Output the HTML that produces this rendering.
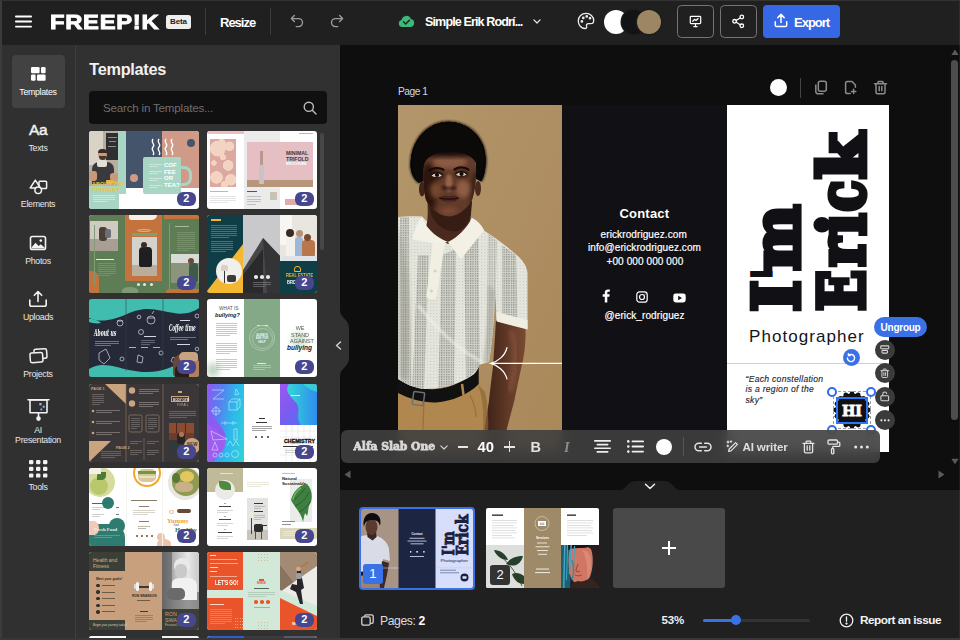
<!DOCTYPE html>
<html lang="en">
<head>
<meta charset="utf-8">
<title>Freepik Designer</title>
<style>
*{box-sizing:border-box;margin:0;padding:0}
html,body{width:960px;height:640px;overflow:hidden;background:#0e0e0e}
body{position:relative;font-family:"Liberation Sans","DejaVu Sans",sans-serif;color:#fff;-webkit-font-smoothing:antialiased}
.abs{position:absolute}
svg{position:absolute;overflow:visible}
.t{position:absolute;white-space:nowrap;line-height:1}
/* ---------- top bar ---------- */
#top{position:absolute;left:0;top:0;width:960px;height:45px;background:#202020;z-index:5}
#top .vd{position:absolute;top:8px;width:1px;height:27px;background:#3c3c3c}
/* ---------- sidebar ---------- */
#side{position:absolute;left:0;top:44px;width:76px;height:596px;background:#303030;border-right:1px solid #3f3f3f}
#side .lab{position:absolute;left:0;width:76px;text-align:center;font-size:8.800px;line-height:11px;color:#e8e8e8;letter-spacing:-.3px}
/* ---------- templates panel ---------- */
#tpl{position:absolute;left:76px;top:44px;width:264px;height:596px;background:#313131;overflow:hidden}
.th{position:absolute;width:110px;height:78px;border-radius:3px;overflow:hidden;background:#fff}
.th i{position:absolute;display:block}
.th b.n{position:absolute;left:88px;top:61px;width:18.500px;height:13.500px;border-radius:6px;background:#47478f;color:#fff;font-size:11px;line-height:13.500px;text-align:center;font-weight:700}
/* ---------- canvas ---------- */
#cv{position:absolute;left:340px;top:44px;width:620px;height:446px;background:#0e0e0e;overflow:hidden}
.pp{color:#fff}
.hd{width:10px;height:10px;border-radius:50%;background:#fff;border:2px solid #2f6bf0}
.rb{left:534.700px;width:20px;height:20px;border-radius:50%;background:#3b3b3b}
/* ---------- bottom ---------- */
#bot{position:absolute;left:340px;top:490px;width:620px;height:150px;background:#202020}
</style>
</head>
<body>

<!-- ================= TOP BAR ================= -->
<div id="top">
  <svg style="left:15px;top:15px" width="18" height="13" viewBox="0 0 18 13"><g fill="#fff"><rect x="0" y="0.6" width="17" height="1.8" rx=".9"/><rect x="0" y="5.6" width="17" height="1.8" rx=".9"/><rect x="0" y="10.7" width="17" height="1.8" rx=".9"/></g></svg>
  <div class="t" id="logo" style="left:49.600px;top:11.600px;font-size:20.500px;font-weight:700;letter-spacing:0.6px;transform-origin:0 0;transform:scaleX(1.16);-webkit-text-stroke:0.9px #fff">FREEP!K</div>
  <div class="t" id="beta" style="left:166px;top:14.800px;width:25px;height:13.800px;border-radius:2.500px;background:#eee;color:#1c1c2a;font-size:8px;line-height:14.500px;text-align:center;font-weight:700;letter-spacing:-.1px">Beta</div>
  <div class="vd" style="left:205px"></div>
  <div class="t" id="resize" style="left:220px;top:16px;font-size:13px;font-weight:700;letter-spacing:-1px">Resize</div>
  <div class="vd" style="left:270px"></div>
  <!-- undo / redo -->
  <svg style="left:290px;top:14px" width="14" height="14" viewBox="0 0 14 14" fill="none" stroke="#9b9b9b" stroke-width="1.4" stroke-linecap="round" stroke-linejoin="round"><path d="M4.4 1.6 1.4 4.6l3 3"/><path d="M1.6 4.6h6.9a4 4 0 0 1 0 8H6.2"/></svg>
  <svg style="left:330px;top:14px" width="14" height="14" viewBox="0 0 14 14" fill="none" stroke="#9b9b9b" stroke-width="1.4" stroke-linecap="round" stroke-linejoin="round"><path d="M9.6 1.6l3 3-3 3"/><path d="M12.4 4.6H5.5a4 4 0 0 0 0 8h2.3"/></svg>
  <!-- cloud -->
  <svg style="left:398px;top:14px" width="17" height="14" viewBox="0 0 17 14"><path d="M4.3 13A3.6 3.6 0 0 1 3.6 5.9 4.8 4.8 0 0 1 12.8 4.9 4.1 4.1 0 0 1 12.6 13Z" fill="#3fb87c"/><path d="M5.6 7.9l2.1 2.1 3.7-3.7" fill="none" stroke="#1c2a22" stroke-width="1.5" stroke-linecap="round" stroke-linejoin="round"/></svg>
  <div class="t" id="docname" style="left:425px;top:16px;font-size:12.600px;font-weight:700;letter-spacing:-.9px">Simple Erik Rodrí...</div>
  <svg style="left:532.500px;top:18.500px" width="8" height="5.300" viewBox="0 0 9 6" fill="none" stroke="#e6e6e6" stroke-width="1.4" stroke-linecap="round" stroke-linejoin="round"><path d="M1 1l3.5 3.5L8 1"/></svg>
  <!-- palette -->
  <svg style="left:577px;top:12px" width="18" height="18" viewBox="0 0 18 18" fill="none" stroke="#ececec" stroke-width="1.3" stroke-linecap="round" stroke-linejoin="round"><path d="M9 1.4C4.7 1.4 1.3 4.7 1.3 8.9c0 4 3.1 7.6 6.6 7.6 1.500 0 2.200-1 1.700-2.300-.5-1.400.2-2.500 1.700-2.500h2.300c1.800 0 3.100-1.300 3.100-3.200C16.700 4.500 13.300 1.400 9 1.400Z"/><circle cx="4.900" cy="9.400" r=".7" fill="#ececec"/><circle cx="6.300" cy="5.900" r=".7" fill="#ececec"/><circle cx="9.700" cy="4.400" r=".7" fill="#ececec"/><circle cx="13" cy="6.200" r=".7" fill="#ececec"/></svg>
  <div class="abs" style="left:604px;top:9.700px;width:24px;height:24px;border-radius:50%;background:#fff"></div>
  <div class="abs" style="left:621.500px;top:9.700px;width:24px;height:24px;border-radius:50%;background:#131315;box-shadow:0 0 0 1.500px #1c1c1c"></div>
  <div class="abs" style="left:637px;top:9.700px;width:24px;height:24px;border-radius:50%;background:#9c8663;box-shadow:0 0 0 1.500px #1c1c1c"></div>
  <!-- present / share / export -->
  <div class="abs" style="left:677px;top:5px;width:37px;height:33px;border:1px solid #757575;border-radius:4.500px"></div>
  <svg style="left:689px;top:15px" width="13" height="13" viewBox="0 0 15 15" fill="none" stroke="#fff" stroke-width="1.4" stroke-linecap="round" stroke-linejoin="round"><rect x="1.500" y="1.500" width="12" height="8.500" rx="1"/><path d="M4.300 7.200 6.300 5l1.700 1.400 2.500-2.400"/><path d="M7.500 10v2.600M5.600 13.300h3.800"/></svg>
  <div class="abs" style="left:720px;top:5px;width:37px;height:33px;border:1px solid #757575;border-radius:4.500px"></div>
  <svg style="left:731px;top:14px" width="15" height="15" viewBox="0 0 15 15" fill="none" stroke="#fff" stroke-width="1.300" stroke-linecap="round" stroke-linejoin="round"><circle cx="10.800" cy="3" r="1.800"/><circle cx="3.600" cy="7.300" r="1.800"/><circle cx="10.800" cy="11.800" r="1.800"/><path d="M5.200 6.400 9.200 4M5.200 8.300l4 2.500"/></svg>
  <div class="abs" style="left:763px;top:5px;width:77px;height:33px;border-radius:4px;background:#3667e4"></div>
  <svg style="left:774px;top:13px" width="14" height="15" viewBox="0 0 14 15" fill="none" stroke="#fff" stroke-width="1.500" stroke-linecap="round" stroke-linejoin="round"><path d="M7 9.500V1.600M3.800 4.600 7 1.400l3.200 3.200"/><path d="M1.300 8.800v3.400a1.300 1.300 0 0 0 1.300 1.300h8.800a1.300 1.300 0 0 0 1.300-1.300V8.800"/></svg>
  <div class="t" id="export" style="left:794px;top:16px;font-size:13px;font-weight:700;letter-spacing:-1px">Export</div>
</div>

<!-- ================= SIDEBAR ================= -->
<div id="side">
  <div class="abs" style="left:12px;top:11px;width:53px;height:53px;border-radius:4px;background:#424242"></div>
  <!-- templates icon -->
  <svg style="left:31px;top:23px" width="15" height="14" viewBox="0 0 15 14" fill="#fff"><rect x="0" y="0" width="8.600" height="6.200" rx="1.200"/><rect x="10" y="0" width="4.600" height="6.200" rx="1.200"/><rect x="0" y="7.600" width="4.600" height="6.200" rx="1.200"/><rect x="6" y="7.600" width="8.600" height="6.200" rx="1.200"/></svg>
  <div class="lab" style="top:43px;color:#fff">Templates</div>
  <!-- texts -->
  <div class="t" style="left:29px;top:78px;font-size:15.500px;font-weight:400;letter-spacing:-0.4px;color:#f2f2f2;-webkit-text-stroke:.45px #f2f2f2">Aa</div>
  <div class="lab" style="top:99px">Texts</div>
  <!-- elements -->
  <svg style="left:29px;top:135px" width="19" height="16" viewBox="0 0 19 16" fill="none" stroke="#f2f2f2" stroke-width="1.500" stroke-linejoin="round"><path d="M6.300 1.200 11.400 9H1.200Z"/><rect x="10" y="2.300" width="7.600" height="7.200" rx=".8"/><circle cx="9.200" cy="11.300" r="3.300" fill="#303030"/></svg>
  <div class="lab" style="top:155px">Elements</div>
  <!-- photos -->
  <svg style="left:29px;top:191px" width="18" height="16" viewBox="0 0 18 16"><rect x="1.500" y="1.500" width="15" height="13" rx="1.800" fill="none" stroke="#f2f2f2" stroke-width="1.600"/><path d="M2.500 12.500 6.500 7.800l3.200 3.300 2-1.800 3.800 3.300v.9h-13Z" fill="#f2f2f2"/><circle cx="11.800" cy="5.600" r="1.300" fill="#f2f2f2"/></svg>
  <div class="lab" style="top:212px">Photos</div>
  <!-- uploads -->
  <svg style="left:28px;top:246px" width="20" height="18" viewBox="0 0 20 18" fill="none" stroke="#f2f2f2" stroke-width="1.600" stroke-linecap="round" stroke-linejoin="round"><path d="M10 11.500V1.800M6.300 5.300 10 1.600l3.700 3.700"/><path d="M1.800 10v4.400a1.800 1.800 0 0 0 1.800 1.800h12.800a1.800 1.800 0 0 0 1.800-1.800V10"/></svg>
  <div class="lab" style="top:268px">Uploads</div>
  <!-- projects -->
  <svg style="left:29px;top:304px" width="19" height="16" viewBox="0 0 19 16" fill="none" stroke="#f2f2f2" stroke-width="1.500" stroke-linejoin="round" stroke-linecap="round"><rect x="5.200" y="1" width="12.600" height="9.600" rx="1.800" transform="rotate(-4 11 6)"/><rect x="1.200" y="4.800" width="12.600" height="9.600" rx="1.800" fill="#303030" transform="rotate(-4 7 10)"/></svg>
  <div class="lab" style="top:325px">Projects</div>
  <!-- AI presentation -->
  <svg style="left:27px;top:354px" width="23" height="24" viewBox="0 0 23 24" fill="none" stroke="#f2f2f2" stroke-width="1.600" stroke-linecap="round" stroke-linejoin="round"><path d="M1 1.800h21"/><rect x="3" y="2" width="17" height="12.800" rx=".6"/><path d="M11.500 15v4"/><circle cx="11.500" cy="20.600" r="1.500" fill="#f2f2f2"/><g stroke="none" fill="#8fb4ff"><rect x="12.300" y="5" width="2.300" height="2.300"/><rect x="15.700" y="7.700" width="2" height="2"/><rect x="13.400" y="10.600" width="1.800" height="1.800"/></g></svg>
  <div class="lab" style="top:380.500px;line-height:10px">AI<br>Presentation</div>
  <!-- tools -->
  <svg style="left:29px;top:416px" width="19" height="18" viewBox="0 0 19 18" fill="#f2f2f2"><g><rect x="0" y="0" width="4.400" height="4.200" rx="1.200"/><rect x="7" y="0" width="4.400" height="4.200" rx="1.200"/><rect x="14" y="0" width="4.400" height="4.200" rx="1.200"/><rect x="0" y="6.700" width="4.400" height="4.200" rx="1.200"/><rect x="7" y="6.700" width="4.400" height="4.200" rx="1.200"/><rect x="14" y="6.700" width="4.400" height="4.200" rx="1.200"/><rect x="0" y="13.400" width="4.400" height="4.200" rx="1.200"/><rect x="7" y="13.400" width="4.400" height="4.200" rx="1.200"/><rect x="14" y="13.400" width="4.400" height="4.200" rx="1.200"/></g></svg>
  <div class="lab" style="top:438px">Tools</div>
</div>

<!-- ================= TEMPLATES PANEL ================= -->
<div id="tpl">
  <div class="t" id="tplh" style="left:13.300px;top:17.400px;font-size:16.300px;font-weight:700;color:#f1f1f1;letter-spacing:-.3px">Templates</div>
  <div class="abs" style="left:13px;top:47px;width:238px;height:33px;border-radius:4px;background:#101010"></div>
  <div class="t" id="srch" style="left:27px;top:58px;font-size:11.600px;color:#6f6f6f;letter-spacing:-.2px">Search in Templates...</div>
  <svg style="left:227px;top:57px" width="14" height="14" viewBox="0 0 14 14" fill="none" stroke="#bdbdbd" stroke-width="1.400" stroke-linecap="round"><circle cx="5.800" cy="5.800" r="4.600"/><path d="M9.300 9.300 13 13"/></svg>
  <div class="abs" style="left:243.700px;top:89px;width:4.600px;height:117px;border-radius:2.300px;background:#474747"></div>
  <div class="th" style="left:13px;top:87px"><i style="left:0px;top:0px;width:30px;height:57px;background:#b9ad9f;"></i><i style="left:0px;top:0px;width:14px;height:34px;background:#d9d2c7;"></i><i style="left:17px;top:2px;width:13px;height:27px;background:#2f2e31;"></i><i style="left:19px;top:6px;width:9px;height:1px;background:#cfcfcf;opacity:.6"></i><i style="left:20px;top:10px;width:7px;height:1px;background:#cfcfcf;opacity:.6"></i><i style="left:19px;top:15px;width:8px;height:1px;background:#cfcfcf;opacity:.6"></i><i style="left:8.5px;top:18.5px;width:9.0px;height:9.0px;background:#c79a7c;border-radius:50%;"></i><i style="left:8.5px;top:17.5px;width:9px;height:4px;background:#3a2a22;border-radius:4px 4px 0 0"></i><i style="left:9.5px;top:24.5px;width:7px;height:4px;background:#4a3328;border-radius:0 0 4px 4px"></i><i style="left:3px;top:31px;width:22px;height:22px;background:#3a393d;border-radius:7px 7px 0 0"></i><i style="left:8px;top:29px;width:10px;height:7px;background:#e3ded6;border-radius:2px"></i><i style="left:0px;top:40px;width:8px;height:10px;background:#c79a7c;border-radius:3px"></i><i style="left:21px;top:42px;width:9px;height:8px;background:#c79a7c;border-radius:3px"></i><i style="left:17px;top:49px;width:8px;height:4px;background:#e2b93b;border-radius:1px"></i><i style="left:0px;top:55px;width:30px;height:23px;background:#a9d6c4;"></i><i style="left:29px;top:0px;width:8px;height:63px;background:#a9d6c4;"></i><i style="left:37px;top:0px;width:36px;height:57px;background:#44546a;"></i><i style="left:73px;top:0px;width:37px;height:57px;background:#cf9b88;"></i><i style="left:92px;top:35px;width:11px;height:20px;background:transparent;border:3px solid #a9d6c4;border-radius:0 8px 8px 0;border-left:0"></i><i style="left:54px;top:26px;width:38px;height:37px;background:#a9d6c4;border-radius:2px"></i><i style="left:41px;top:43px;width:8px;height:8px;background:#cf9b88;border-radius:50%;"></i><i style="left:98px;top:8px;width:8px;height:8px;background:#44546a;border-radius:50%;"></i><span class="t" style="left:75px;top:31px;font-size:6px;color:#fff;font-weight:700;line-height:6.6px;white-space:normal;width:20px">COF<br>FEE<br>OR<br>TEA?</span><span class="t" style="left:3px;top:51px;font-size:5.5px;color:#f0c040;font-weight:700;line-height:5.5px">ABOUT THE<br>COMPANY</span><i style="left:60px;top:33px;width:13px;height:1px;background:#e8f5ef;opacity:.55"></i><i style="left:60px;top:35px;width:9px;height:1px;background:#e8f5ef;opacity:.55"></i><i style="left:60px;top:40px;width:13px;height:1px;background:#e8f5ef;opacity:.55"></i><i style="left:60px;top:42px;width:9px;height:1px;background:#e8f5ef;opacity:.55"></i><i style="left:60px;top:47px;width:13px;height:1px;background:#e8f5ef;opacity:.55"></i><i style="left:60px;top:49px;width:9px;height:1px;background:#e8f5ef;opacity:.55"></i><i style="left:60px;top:54px;width:13px;height:1px;background:#e8f5ef;opacity:.55"></i><i style="left:60px;top:56px;width:9px;height:1px;background:#e8f5ef;opacity:.55"></i><i style="left:4px;top:64px;width:22px;height:1px;background:#e8f5ef;opacity:.55"></i><i style="left:4px;top:66px;width:22px;height:1px;background:#e8f5ef;opacity:.55"></i><i style="left:4px;top:68px;width:22px;height:1px;background:#e8f5ef;opacity:.55"></i><i style="left:4px;top:70px;width:15px;height:1px;background:#e8f5ef;opacity:.55"></i><svg style="left:62px;top:8px" width="26" height="17" viewBox="0 0 26 17" fill="none" stroke="#fff" stroke-width="1.300"><path d="M2 0c-3 4 3 5 0 8s3 5 0 8M8 0c-3 4 3 5 0 8s3 5 0 8M15 0c-3 4 3 5 0 8s3 5 0 8M21 0c-3 4 3 5 0 8s3 5 0 8"/></svg><b class="n">2</b></div>
  <div class="th" style="left:131px;top:87px"><i style="left:0px;top:0px;width:37px;height:3px;background:#ecc0c0;"></i><i style="left:3px;top:8px;width:26px;height:48px;background:#dba8a2;background-image:radial-gradient(circle at 30% 20%,#f3d3c2 0 18%,transparent 19%),radial-gradient(circle at 70% 55%,#f3d3c2 0 16%,transparent 17%),radial-gradient(circle at 25% 80%,#f3d3c2 0 14%,transparent 15%),radial-gradient(circle at 75% 15%,#f3d3c2 0 10%,transparent 11%),radial-gradient(circle at 50% 38%,#f3d3c2 0 9%,transparent 10%),radial-gradient(circle at 15% 50%,#f3d3c2 0 8%,transparent 9%),radial-gradient(circle at 80% 85%,#f3d3c2 0 12%,transparent 13%),radial-gradient(circle at 55% 95%,#f3d3c2 0 7%,transparent 8%),radial-gradient(circle at 45% 8%,#f3d3c2 0 8%,transparent 9%)"></i><i style="left:37px;top:0px;width:36px;height:78px;background:#ebebeb;"></i><i style="left:40px;top:11px;width:66px;height:45px;background:#e5bfc3;"></i><i style="left:40px;top:49px;width:66px;height:7px;background:#b7967c;"></i><i style="left:52px;top:33px;width:5px;height:20px;background:#c9c3c3;border-radius:2px 2px 1px 1px"></i><i style="left:53px;top:20px;width:3px;height:14px;background:#b79a8e;"></i><span class="t" style="left:79px;top:19px;font-size:5.2px;color:#3a3a3a;font-weight:700;line-height:6px">MINIMAL<br>TRIFOLD</span><span class="t" style="left:79px;top:32px;font-size:3.6px;color:#fff;font-weight:700">BROCHURE</span><i style="left:3px;top:60px;width:18px;height:1px;background:#e3a7a7;"></i><i style="left:3px;top:65px;width:26px;height:1px;background:#cfcfcf;opacity:.55"></i><i style="left:3px;top:67px;width:26px;height:1px;background:#cfcfcf;opacity:.55"></i><i style="left:3px;top:69px;width:26px;height:1px;background:#cfcfcf;opacity:.55"></i><i style="left:3px;top:71px;width:18px;height:1px;background:#cfcfcf;opacity:.55"></i><i style="left:40px;top:60px;width:10px;height:1px;background:#555;"></i><i style="left:40px;top:65.0px;width:14px;height:1px;background:#9a9a9a;opacity:.55"></i><i style="left:40px;top:67.5px;width:14px;height:1px;background:#9a9a9a;opacity:.55"></i><i style="left:40px;top:70.0px;width:14px;height:1px;background:#9a9a9a;opacity:.55"></i><i style="left:40px;top:72.5px;width:9px;height:1px;background:#9a9a9a;opacity:.55"></i><i style="left:63px;top:61px;width:7px;height:8px;background:#c9c2b5;"></i><i style="left:78px;top:68px;width:28px;height:6px;background:#e3aaaa;"></i><i style="left:92px;top:2px;width:14px;height:1px;background:#e3a7a7;"></i><b class="n">2</b></div>
  <div class="th" style="left:13px;top:171px"><i style="left:0px;top:0px;width:110px;height:78px;background:#5f7d55;"></i><i style="left:36px;top:0px;width:37px;height:66px;background:#c3733b;"></i><i style="left:40px;top:0px;width:28px;height:5px;background:#f4efe8;border-radius:0 0 6px 3px"></i><i style="left:75px;top:0px;width:35px;height:4px;background:#c3733b;"></i><i style="left:1px;top:6px;width:28px;height:30px;background:#cfcac2;"></i><i style="left:1px;top:24px;width:28px;height:12px;background:#a79f93;"></i><i style="left:10px;top:12px;width:8px;height:14px;background:#4a4038;border-radius:3px"></i><i style="left:16px;top:14px;width:6px;height:9px;background:#6a7076;border-radius:2px"></i><i style="left:43px;top:22px;width:25px;height:39px;background:#d4d2cd;"></i><i style="left:43px;top:50px;width:25px;height:11px;background:#b9ad9c;"></i><i style="left:50px;top:32px;width:13px;height:20px;background:#1f1f22;border-radius:4px 4px 2px 2px"></i><i style="left:52px;top:27px;width:6px;height:6px;background:#3a2c25;border-radius:50%;"></i><i style="left:43px;top:18px;width:25px;height:3px;background:#7da26c;"></i><i style="left:82px;top:39px;width:28px;height:29px;background:#8d947c;"></i><i style="left:82px;top:39px;width:28px;height:9px;background:#d9dcd6;"></i><i style="left:100px;top:48px;width:9px;height:20px;background:#3d5a4a;border-radius:3px"></i><i style="left:99px;top:43px;width:6px;height:6px;background:#6b4a38;border-radius:50%;"></i><i style="left:0px;top:56px;width:10px;height:22px;background:#c3733b;border-radius:0 8px 0 0"></i><i style="left:77px;top:74px;width:33px;height:4px;background:#c3733b;border-radius:4px 0 0 0"></i><i style="left:5px;top:10px;width:1px;height:60px;background:#7f9a74;"></i><i style="left:80px;top:8px;width:1px;height:66px;background:#7f9a74;"></i><i style="left:7px;top:44px;width:18px;height:1px;background:#e9eee4;"></i><i style="left:9px;top:48px;width:18px;height:1px;background:#86a07c;opacity:.55"></i><i style="left:9px;top:50px;width:18px;height:1px;background:#86a07c;opacity:.55"></i><i style="left:9px;top:52px;width:18px;height:1px;background:#86a07c;opacity:.55"></i><i style="left:9px;top:54px;width:18px;height:1px;background:#86a07c;opacity:.55"></i><i style="left:9px;top:56px;width:18px;height:1px;background:#86a07c;opacity:.55"></i><i style="left:9px;top:58px;width:18px;height:1px;background:#86a07c;opacity:.55"></i><i style="left:9px;top:60px;width:12px;height:1px;background:#86a07c;opacity:.55"></i><i style="left:86px;top:11px;width:14px;height:1px;background:#e9eee4;opacity:.55"></i><i style="left:88px;top:17px;width:18px;height:1px;background:#86a07c;opacity:.55"></i><i style="left:88px;top:19px;width:18px;height:1px;background:#86a07c;opacity:.55"></i><i style="left:88px;top:21px;width:18px;height:1px;background:#86a07c;opacity:.55"></i><i style="left:88px;top:23px;width:18px;height:1px;background:#86a07c;opacity:.55"></i><i style="left:88px;top:25px;width:18px;height:1px;background:#86a07c;opacity:.55"></i><i style="left:88px;top:27px;width:18px;height:1px;background:#86a07c;opacity:.55"></i><i style="left:88px;top:29px;width:18px;height:1px;background:#86a07c;opacity:.55"></i><i style="left:88px;top:31px;width:18px;height:1px;background:#86a07c;opacity:.55"></i><i style="left:88px;top:33px;width:18px;height:1px;background:#86a07c;opacity:.55"></i><i style="left:88px;top:35px;width:12px;height:1px;background:#86a07c;opacity:.55"></i><i style="left:47.5px;top:67.5px;width:3.0px;height:3.0px;background:#e6e6e0;border-radius:50%;"></i><i style="left:53.5px;top:67.5px;width:3.0px;height:3.0px;background:#e6e6e0;border-radius:50%;"></i><i style="left:60.5px;top:67.5px;width:3.0px;height:3.0px;background:#e6e6e0;border-radius:50%;"></i><i style="left:33px;top:72px;width:16px;height:6px;background:#7f9a74;border-radius:50% 50% 0 0"></i><i style="left:48px;top:14px;width:14px;height:3px;background:transparent;border:1px solid #e5b48f;border-radius:50%"></i><b class="n">2</b></div>
  <div class="th" style="left:131px;top:171px"><i style="left:0px;top:0px;width:36px;height:78px;background:#0f3e46;"></i><svg style="left:0;top:0" width="110" height="78" viewBox="0 0 110 78"><path d="M36 29V78H0v-2Z" fill="#f4b731"/><rect x="36" y="0" width="37" height="78" fill="#c9c9cb"/><path d="M36 55 56 23 73 41V78H36Z" fill="#47474a"/><path d="M56 23 73 41V78H60Z" fill="#343437"/><path d="M36 60l20-26v44H36Z" fill="#2a2a2d"/></svg><i style="left:9px;top:43px;width:26px;height:26px;background:#f1efec;border-radius:50%;"></i><i style="left:14px;top:50px;width:7px;height:6px;background:#d9d1c4;border-radius:2px 2px 0 0"></i><i style="left:17px;top:56px;width:1px;height:12px;background:#333;"></i><i style="left:20px;top:60px;width:9px;height:7px;background:#3a3a3c;border-radius:2px"></i><i style="left:73px;top:0px;width:37px;height:46px;background:#e9e5df;"></i><i style="left:73px;top:0px;width:12px;height:30px;background:#f7f6f3;"></i><i style="left:79px;top:19px;width:9px;height:24px;background:#f3f1ee;border-radius:3px"></i><i style="left:79px;top:14px;width:8px;height:8px;background:#3a2a22;border-radius:50%;"></i><i style="left:88px;top:22px;width:8px;height:22px;background:#9db8d6;border-radius:3px"></i><i style="left:88.5px;top:14.5px;width:7.0px;height:7.0px;background:#b58f78;border-radius:50%;"></i><i style="left:95px;top:25px;width:13px;height:18px;background:#b9764a;border-radius:4px"></i><i style="left:96.5px;top:18.5px;width:7.0px;height:7.0px;background:#7a4a30;border-radius:50%;"></i><i style="left:75px;top:41px;width:35px;height:5px;background:#dfe3e8;"></i><i style="left:73px;top:46px;width:37px;height:32px;background:#0f3e46;"></i><span class="t" style="left:79px;top:58px;font-size:5px;color:#f4b731;font-weight:700;transform:scaleX(.8);transform-origin:0 0">REAL ESTATE</span><span class="t" style="left:80px;top:65px;font-size:5px;color:#fff;font-weight:700;transform:scaleX(.8);transform-origin:0 0">BRO</span><i style="left:87px;top:51px;width:7px;height:6px;background:transparent;border:1px solid #f4b731;border-radius:3px 3px 0 0"></i><i style="left:4px;top:4px;width:10px;height:2px;background:#f4b731;"></i><i style="left:4px;top:10px;width:26px;height:1px;background:#7e9a9e;opacity:.55"></i><i style="left:4px;top:12px;width:26px;height:1px;background:#7e9a9e;opacity:.55"></i><i style="left:4px;top:14px;width:26px;height:1px;background:#7e9a9e;opacity:.55"></i><i style="left:4px;top:16px;width:26px;height:1px;background:#7e9a9e;opacity:.55"></i><i style="left:4px;top:18px;width:26px;height:1px;background:#7e9a9e;opacity:.55"></i><i style="left:4px;top:20px;width:26px;height:1px;background:#7e9a9e;opacity:.55"></i><i style="left:4px;top:22px;width:18px;height:1px;background:#7e9a9e;opacity:.55"></i><i style="left:4px;top:26px;width:22px;height:1px;background:#7e9a9e;opacity:.55"></i><i style="left:4px;top:28px;width:22px;height:1px;background:#7e9a9e;opacity:.55"></i><i style="left:4px;top:30px;width:22px;height:1px;background:#7e9a9e;opacity:.55"></i><i style="left:4px;top:32px;width:22px;height:1px;background:#7e9a9e;opacity:.55"></i><i style="left:4px;top:34px;width:22px;height:1px;background:#7e9a9e;opacity:.55"></i><i style="left:4px;top:36px;width:15px;height:1px;background:#7e9a9e;opacity:.55"></i><i style="left:47.2px;top:60.2px;width:3.6px;height:3.6px;background:#e6e6e6;border-radius:50%;"></i><i style="left:53.2px;top:60.2px;width:3.6px;height:3.6px;background:#e6e6e6;border-radius:50%;"></i><i style="left:59.2px;top:60.2px;width:3.6px;height:3.6px;background:#e6e6e6;border-radius:50%;"></i><i style="left:46px;top:67px;width:18px;height:1px;background:#8a8a8c;opacity:.55"></i><i style="left:46px;top:69px;width:18px;height:1px;background:#8a8a8c;opacity:.55"></i><i style="left:46px;top:71px;width:12px;height:1px;background:#8a8a8c;opacity:.55"></i><b class="n">2</b></div>
  <div class="th" style="left:13px;top:255px"><i style="left:0px;top:0px;width:110px;height:78px;background:#262a38;"></i><svg style="left:0;top:0" width="110" height="78" viewBox="0 0 110 78"><path d="M0 0H110V9C98 17 88 15 74 12S52 9 38 15 12 24 0 19Z" fill="#41bdb0"/><path d="M0 70C12 62 26 68 40 71s28 3 40-2 22-4 30 0V78H0Z" fill="#41bdb0"/><path d="M0 20c6 0 10 2 12 4-4 1-9 0-12-1Z" fill="#41bdb0"/><g fill="none" stroke="#d7dbe6" stroke-width=".7"><circle cx="62" cy="21" r="4"/><path d="M58 19h8M63 15l2-3"/><circle cx="31" cy="24" r="3"/><path d="M28 22h6"/><circle cx="50" cy="18" r="1.800"/><circle cx="52" cy="33" r="2.500"/><path d="M10 54l7-4 4 9-6 6-5-4Z"/><circle cx="33" cy="60" r="2"/><path d="M49 56l5 2-1 6-5-1Z"/><circle cx="72" cy="54" r="2"/><path d="M84 58l3 2-2 4-3-2Z"/><circle cx="108" cy="17" r="2"/><circle cx="108" cy="50" r="1.800"/></g><path d="M37 0V72M74 0V70" stroke="#3a4052" stroke-width=".6"/></svg><span class="t" style="left:5px;top:29.5px;font-size:9px;color:#fff;font-family:'DejaVu Serif',serif;font-style:italic;font-weight:700;transform:scaleX(.5);transform-origin:0 0">About us</span><span class="t" style="left:79.5px;top:24.5px;font-size:9px;color:#fff;font-family:'DejaVu Serif',serif;font-style:italic;font-weight:700;transform:scaleX(.46);transform-origin:0 0">Coffee time</span><i style="left:6px;top:42px;width:24px;height:1px;background:#aab0c0;opacity:.55"></i><i style="left:6px;top:44px;width:24px;height:1px;background:#aab0c0;opacity:.55"></i><i style="left:6px;top:46px;width:16px;height:1px;background:#aab0c0;opacity:.55"></i><i style="left:81px;top:38px;width:26px;height:1px;background:#aab0c0;opacity:.55"></i><i style="left:81px;top:40px;width:18px;height:1px;background:#aab0c0;opacity:.55"></i><i style="left:88px;top:45px;width:13px;height:1px;background:#d5d9e4;"></i><i style="left:55px;top:37px;width:12px;height:1px;background:#d5d9e4;"></i><i style="left:52px;top:41.0px;width:14px;height:1px;background:#8f96a8;opacity:.55"></i><i style="left:52px;top:42.8px;width:14px;height:1px;background:#8f96a8;opacity:.55"></i><i style="left:52px;top:44.6px;width:9px;height:1px;background:#8f96a8;opacity:.55"></i><i style="left:40px;top:48px;width:7px;height:1px;background:#aab0c0;"></i><i style="left:52px;top:48px;width:7px;height:1px;background:#aab0c0;"></i><i style="left:64px;top:48px;width:7px;height:1px;background:#aab0c0;"></i><i style="left:91px;top:21px;width:10px;height:1px;background:#d5d9e4;"></i><i style="left:84px;top:55px;width:26px;height:23px;background:#6b4630;border-radius:9px 8px 0 4px"></i><i style="left:90px;top:53px;width:19px;height:10px;background:#c9a27f;border-radius:8px 7px 5px 9px"></i><i style="left:86px;top:66px;width:14px;height:12px;background:#2a1c16;border-radius:5px 5px 0 0"></i><i style="left:100px;top:62px;width:10px;height:16px;background:#b57f5c;border-radius:4px 0 0 0"></i><b class="n">2</b></div>
  <div class="th" style="left:131px;top:255px"><i style="left:37px;top:0px;width:36px;height:78px;background:#84a987;"></i><i style="left:50px;top:26px;width:11px;height:1px;background:#e2eee3;"></i><i style="left:42px;top:26px;width:26px;height:26px;background:transparent;border-radius:50%;border:1px solid #a9c6ab"></i><i style="left:44.5px;top:28.5px;width:21.0px;height:21.0px;background:transparent;border-radius:50%;border:1px solid #a9c6ab"></i><span class="t" style="left:47px;top:35px;font-size:2.8px;color:#eef5ee;line-height:3.300px;text-align:center;width:16px;white-space:normal;font-weight:700">ALWAYS<br>ASK FOR<br>HELP</span><span class="t" style="left:12px;top:8px;font-size:4.8px;color:#555;">WHAT IS</span><span class="t" style="left:8px;top:14px;font-size:5.6px;color:#222;font-style:italic;font-weight:700">bullying?</span><i style="left:9px;top:24px;width:21px;height:1px;background:#9a9a9a;opacity:.55"></i><i style="left:9px;top:26px;width:21px;height:1px;background:#9a9a9a;opacity:.55"></i><i style="left:9px;top:28px;width:21px;height:1px;background:#9a9a9a;opacity:.55"></i><i style="left:9px;top:30px;width:21px;height:1px;background:#9a9a9a;opacity:.55"></i><i style="left:9px;top:32px;width:21px;height:1px;background:#9a9a9a;opacity:.55"></i><i style="left:9px;top:34px;width:21px;height:1px;background:#9a9a9a;opacity:.55"></i><i style="left:9px;top:36px;width:14px;height:1px;background:#9a9a9a;opacity:.55"></i><i style="left:9px;top:44px;width:21px;height:1px;background:#9a9a9a;opacity:.55"></i><i style="left:9px;top:46px;width:21px;height:1px;background:#9a9a9a;opacity:.55"></i><i style="left:9px;top:48px;width:21px;height:1px;background:#9a9a9a;opacity:.55"></i><i style="left:9px;top:50px;width:21px;height:1px;background:#9a9a9a;opacity:.55"></i><i style="left:9px;top:52px;width:21px;height:1px;background:#9a9a9a;opacity:.55"></i><i style="left:9px;top:54px;width:14px;height:1px;background:#9a9a9a;opacity:.55"></i><i style="left:9px;top:60px;width:21px;height:1px;background:#9a9a9a;opacity:.55"></i><i style="left:9px;top:62px;width:21px;height:1px;background:#9a9a9a;opacity:.55"></i><i style="left:9px;top:64px;width:21px;height:1px;background:#9a9a9a;opacity:.55"></i><i style="left:9px;top:66px;width:21px;height:1px;background:#9a9a9a;opacity:.55"></i><i style="left:9px;top:68px;width:21px;height:1px;background:#9a9a9a;opacity:.55"></i><i style="left:9px;top:70px;width:14px;height:1px;background:#9a9a9a;opacity:.55"></i><i style="left:84px;top:33px;width:16px;height:16px;background:#cfe3d0;border-radius:50%;filter:blur(3px)"></i><span class="t" style="left:82px;top:26px;font-size:6px;color:#555;line-height:6.600px;text-align:center;width:22px;white-space:normal;transform:scaleX(.9)">WE<br>STAND<br>AGAINST</span><span class="t" style="left:80px;top:46px;font-size:6.5px;color:#222;font-style:italic;font-weight:700">bullying</span><i style="left:0px;top:64px;width:12px;height:14px;background:#a9c6ab;border-radius:50%;filter:blur(3px);opacity:.8"></i><i style="left:46px;top:66px;width:18px;height:1px;background:#c9dcca;opacity:.55"></i><i style="left:46px;top:68px;width:18px;height:1px;background:#c9dcca;opacity:.55"></i><i style="left:46px;top:70px;width:12px;height:1px;background:#c9dcca;opacity:.55"></i><i style="left:50px;top:64px;width:9px;height:1px;background:#e2eee3;"></i><b class="n">2</b></div>
  <div class="th" style="left:13px;top:340px"><i style="left:0px;top:0px;width:110px;height:78px;background:#3b3637;"></i><svg style="left:0;top:0" width="110" height="78" viewBox="0 0 110 78"><path d="M16 0H37V20Z" fill="#c9a57f"/><path d="M0 57H22L0 78Z" fill="#c9a57f"/><path d="M37 0V78M74 0V78" stroke="#8a7460" stroke-width=".7"/><circle cx="43" cy="6.500" r="3.200" fill="#c9a57f"/><circle cx="43" cy="19.500" r="3.200" fill="#c9a57f"/><rect x="40" y="31" width="13" height="17" rx="1.500" fill="none" stroke="#9a8068" stroke-width=".7"/><rect x="57" y="31" width="13" height="17" rx="1.500" fill="none" stroke="#9a8068" stroke-width=".7"/><path d="M55 54V76" stroke="#8a7460" stroke-width=".6"/><circle cx="4" cy="27" r="1.300" fill="#c9a57f"/><circle cx="4" cy="38" r="1.300" fill="#c9a57f"/><circle cx="4" cy="49" r="1.300" fill="#c9a57f"/></svg><span class="t" style="left:2px;top:4px;font-size:3.8px;color:#c9a57f;font-weight:700">PAGE 1</span><span class="t" style="left:29px;top:63px;font-size:3.8px;color:#c9a57f;font-weight:700;left:27px">PAGE 2</span><i style="left:3px;top:10px;width:12px;height:1px;background:#8d8687;opacity:.55"></i><i style="left:3px;top:12px;width:12px;height:1px;background:#8d8687;opacity:.55"></i><i style="left:3px;top:14px;width:12px;height:1px;background:#8d8687;opacity:.55"></i><i style="left:3px;top:16px;width:12px;height:1px;background:#8d8687;opacity:.55"></i><i style="left:3px;top:18px;width:12px;height:1px;background:#8d8687;opacity:.55"></i><i style="left:3px;top:20px;width:8px;height:1px;background:#8d8687;opacity:.55"></i><i style="left:7px;top:26px;width:24px;height:1px;background:#a8a0a0;opacity:.55"></i><i style="left:7px;top:28px;width:16px;height:1px;background:#a8a0a0;opacity:.55"></i><i style="left:7px;top:37px;width:24px;height:1px;background:#a8a0a0;opacity:.55"></i><i style="left:7px;top:39px;width:16px;height:1px;background:#a8a0a0;opacity:.55"></i><i style="left:7px;top:48px;width:24px;height:1px;background:#a8a0a0;opacity:.55"></i><i style="left:7px;top:50px;width:16px;height:1px;background:#a8a0a0;opacity:.55"></i><i style="left:12px;top:67px;width:20px;height:1px;background:#8d8687;opacity:.55"></i><i style="left:12px;top:69px;width:20px;height:1px;background:#8d8687;opacity:.55"></i><i style="left:12px;top:71px;width:20px;height:1px;background:#8d8687;opacity:.55"></i><i style="left:12px;top:73px;width:14px;height:1px;background:#8d8687;opacity:.55"></i><i style="left:50px;top:5px;width:20px;height:1px;background:#a8a0a0;opacity:.55"></i><i style="left:50px;top:7px;width:20px;height:1px;background:#a8a0a0;opacity:.55"></i><i style="left:50px;top:9px;width:14px;height:1px;background:#a8a0a0;opacity:.55"></i><i style="left:50px;top:18px;width:20px;height:1px;background:#a8a0a0;opacity:.55"></i><i style="left:50px;top:20px;width:20px;height:1px;background:#a8a0a0;opacity:.55"></i><i style="left:50px;top:22px;width:14px;height:1px;background:#a8a0a0;opacity:.55"></i><i style="left:42px;top:34px;width:9px;height:1px;background:#8d8687;opacity:.55"></i><i style="left:42px;top:36px;width:9px;height:1px;background:#8d8687;opacity:.55"></i><i style="left:42px;top:38px;width:9px;height:1px;background:#8d8687;opacity:.55"></i><i style="left:42px;top:40px;width:9px;height:1px;background:#8d8687;opacity:.55"></i><i style="left:42px;top:42px;width:9px;height:1px;background:#8d8687;opacity:.55"></i><i style="left:42px;top:44px;width:6px;height:1px;background:#8d8687;opacity:.55"></i><i style="left:59px;top:34px;width:9px;height:1px;background:#8d8687;opacity:.55"></i><i style="left:59px;top:36px;width:9px;height:1px;background:#8d8687;opacity:.55"></i><i style="left:59px;top:38px;width:9px;height:1px;background:#8d8687;opacity:.55"></i><i style="left:59px;top:40px;width:9px;height:1px;background:#8d8687;opacity:.55"></i><i style="left:59px;top:42px;width:9px;height:1px;background:#8d8687;opacity:.55"></i><i style="left:59px;top:44px;width:6px;height:1px;background:#8d8687;opacity:.55"></i><i style="left:41px;top:57px;width:12px;height:1px;background:#8d8687;opacity:.55"></i><i style="left:41px;top:59px;width:8px;height:1px;background:#8d8687;opacity:.55"></i><i style="left:58px;top:57px;width:12px;height:1px;background:#8d8687;opacity:.55"></i><i style="left:58px;top:59px;width:8px;height:1px;background:#8d8687;opacity:.55"></i><i style="left:41px;top:66px;width:12px;height:1px;background:#8d8687;opacity:.55"></i><i style="left:41px;top:68px;width:12px;height:1px;background:#8d8687;opacity:.55"></i><i style="left:41px;top:70px;width:8px;height:1px;background:#8d8687;opacity:.55"></i><i style="left:58px;top:66px;width:12px;height:1px;background:#8d8687;opacity:.55"></i><i style="left:58px;top:68px;width:12px;height:1px;background:#8d8687;opacity:.55"></i><i style="left:58px;top:70px;width:8px;height:1px;background:#8d8687;opacity:.55"></i><i style="left:82px;top:12px;width:18px;height:6px;background:transparent;border:1px solid #c9a57f"></i><span class="t" style="left:84px;top:13.5px;font-size:4px;color:#f1e6d8;font-weight:700;transform:scaleX(.75);transform-origin:0 0">BODY GYM</span><span class="t" style="left:88px;top:20px;font-size:3.5px;color:#c9a57f;transform:scaleX(.8);transform-origin:0 0">FOR ALL</span><i style="left:89px;top:7px;width:4px;height:2px;background:#c9a57f;"></i><i style="left:80px;top:27px;width:27px;height:1px;background:#8d8687;opacity:.55"></i><i style="left:80px;top:29px;width:27px;height:1px;background:#8d8687;opacity:.55"></i><i style="left:80px;top:31px;width:27px;height:1px;background:#8d8687;opacity:.55"></i><i style="left:80px;top:33px;width:18px;height:1px;background:#8d8687;opacity:.55"></i><i style="left:80px;top:39px;width:25px;height:31px;background:#6c3d2a;"></i><i style="left:80px;top:39px;width:25px;height:10px;background:#8a4b30;"></i><i style="left:80px;top:56px;width:25px;height:14px;background:#32383c;"></i><i style="left:88px;top:49px;width:8px;height:11px;background:#2a2426;border-radius:3px"></i><i style="left:89.5px;top:47.5px;width:5.0px;height:5.0px;background:#b07a5a;border-radius:50%;"></i><i style="left:87px;top:39px;width:1px;height:10px;background:#4a2a1e;"></i><i style="left:96px;top:39px;width:1px;height:10px;background:#4a2a1e;"></i><i style="left:95px;top:54px;width:16px;height:16px;background:#c9a57f;border-radius:50%;"></i><span class="t" style="left:98px;top:59px;font-size:4.5px;color:#3b3637;font-weight:700">NEW</span><b class="n">2</b></div>
  <div class="th" style="left:131px;top:340px"><i style="left:0px;top:0px;width:37px;height:78px;background:#6a6cf0;background:linear-gradient(100deg,#8a5cf0 0%,#5a7df0 30%,#2bb9ea 62%,#31d3d9 100%)"></i><svg style="left:0;top:0" width="110" height="78" viewBox="0 0 110 78"><defs><linearGradient id="cg1" x1="0" y1="0" x2="1" y2="1"><stop offset="0" stop-color="#9a58f2"/><stop offset=".45" stop-color="#7a5cf0"/><stop offset="1" stop-color="#3f7af0"/></linearGradient><linearGradient id="cg2" x1="0" y1="0" x2="1" y2="0"><stop offset="0" stop-color="#35d6d6"/><stop offset="1" stop-color="#2f8cf0"/></linearGradient></defs><path d="M0 0H6C0 14 2 24 5 30S15 42 18 50 14 66 6 78H0Z" fill="#8b5cf2"/><path d="M0 40c8 4 16 10 18 18S10 72 4 78H0Z" fill="#a35cf0" opacity=".8"/><rect x="73" y="0" width="37" height="41" fill="url(#cg1)"/><path d="M82 0c-6 8 4 14 8 20s-2 14 4 21H110V0Z" fill="url(#cg2)"/><path d="M96 0c6 6 14 8 14 8V0Z" fill="#3fe0c8" opacity=".7"/><g fill="none" stroke="#e9f6ff" stroke-width=".6" opacity=".85"><path d="M5 6H17L6 15H17"/><rect x="22" y="18" width="8" height="8"/><path d="M22 18l3-3h8l-3 3M33 15v8l-3 3"/><circle cx="9" cy="27" r="3.500"/><path d="M4 27h10M9 22v10"/><path d="M4 47 20 55 6 56Z"/><path d="M14 39h16M18 37v4M26 37v4"/><rect x="27" y="45" width="3" height="11"/><path d="M20 62l3-5 3 5 3-5 3 5"/><circle cx="8" cy="71" r="2"/><circle cx="14" cy="71" r="2"/><circle cx="20" cy="71" r="2"/><circle cx="28" cy="70" r="3.500"/><path d="M8 58l3 8H5Z"/><path d="M29 5l3 5-4 1Z"/></g><g stroke="#d5d5d5" stroke-width=".4"><path d="M73 47h37M73 53h37M73 59h37M73 65h37M73 71h37M79 41v37M85 41v37M91 41v37M97 41v37M103 41v37"/></g></svg><i style="left:37px;top:0px;width:36px;height:78px;background:#fff;"></i><span class="t" style="left:77px;top:55px;font-size:5.3px;color:#111;font-weight:700;-webkit-text-stroke:.3px #111">CHEMISTRY</span><i style="left:76px;top:62px;width:30px;height:1px;background:#333;"></i><i style="left:78px;top:66px;width:26px;height:1px;background:#aaa;opacity:.55"></i><i style="left:78px;top:68px;width:18px;height:1px;background:#aaa;opacity:.55"></i><i style="left:52px;top:34px;width:6px;height:1px;background:#333;"></i><i style="left:49px;top:38px;width:11px;height:1px;background:#333;"></i><i style="left:45px;top:42px;width:20px;height:1px;background:#555;opacity:.55"></i><i style="left:45px;top:44px;width:20px;height:1px;background:#555;opacity:.55"></i><i style="left:45px;top:46px;width:14px;height:1px;background:#555;opacity:.55"></i><i style="left:48px;top:52px;width:2px;height:2px;background:#333;border-radius:50%;"></i><i style="left:53.8px;top:51.8px;width:2.4px;height:2.4px;background:#333;border-radius:50%;"></i><i style="left:60px;top:52px;width:2px;height:2px;background:#333;border-radius:50%;"></i><i style="left:84px;top:11px;width:9px;height:1px;background:#e9f6ff;"></i><b class="n">2</b></div>
  <div class="th" style="left:13px;top:424px"><i style="left:-4px;top:-1px;width:30px;height:30px;background:#d7dc9e;border-radius:50%;"></i><i style="left:1px;top:9px;width:18px;height:18px;background:#b9c86a;border-radius:50%;"></i><i style="left:8px;top:4px;width:9px;height:8px;background:#4f7a34;border-radius:50% 0 50% 0"></i><i style="left:0px;top:0px;width:12px;height:6px;background:#f3f0e6;"></i><i style="left:13px;top:29px;width:12px;height:12px;background:#2e7b70;border-radius:50%;"></i><i style="left:44px;top:-9px;width:28px;height:28px;background:#f2a52c;border-radius:50%;"></i><i style="left:45.8px;top:-7.199999999999999px;width:24.4px;height:24.4px;background:#fff;border-radius:50%;"></i><i style="left:49px;top:1px;width:18px;height:13px;background:#d9c79a;border-radius:5px"></i><i style="left:49px;top:3px;width:18px;height:3px;background:#6f9a3c;"></i><i style="left:50px;top:8px;width:16px;height:2px;background:#e9e1c9;"></i><i style="left:79px;top:-2px;width:34px;height:34px;background:#e9e6e0;border-radius:50%;"></i><i style="left:83px;top:0px;width:28px;height:28px;background:#8f9a52;border-radius:50%;"></i><i style="left:91px;top:3px;width:14px;height:11px;background:#e3c65c;border-radius:50%"></i><i style="left:86px;top:14px;width:18px;height:10px;background:#c9b089;border-radius:40%"></i><i style="left:83px;top:5px;width:8px;height:10px;background:#56793a;border-radius:50%"></i><i style="left:0px;top:56px;width:36px;height:22px;background:#2e7b70;border-radius:0 14px 0 0"></i><i style="left:20px;top:50px;width:16px;height:16px;background:#2e7b70;border-radius:50%"></i><i style="left:0px;top:53px;width:10px;height:14px;background:#f1c9b6;border-radius:0 50% 50% 0"></i><span class="t" style="left:5px;top:60px;font-size:4.8px;color:#f4efe6;font-weight:700;font-family:'Liberation Serif',serif">Fresh Food</span><i style="left:5px;top:67px;width:26px;height:1px;background:#7fb3aa;opacity:.55"></i><i style="left:5px;top:69px;width:18px;height:1px;background:#7fb3aa;opacity:.55"></i><i style="left:68px;top:71px;width:14px;height:9px;background:#eec4ad;border-radius:50% 50% 0 0"></i><i style="left:68px;top:65px;width:8px;height:8px;background:#eec4ad;border-radius:50%;"></i><span class="t" style="left:78px;top:50px;font-size:6.5px;color:#f0a23a;font-weight:700;font-family:'Liberation Serif',serif">Yummy</span><span class="t" style="left:84px;top:56px;font-size:3.6px;color:#555;font-style:italic;font-family:'Liberation Serif',serif">And</span><span class="t" style="left:85px;top:59px;font-size:6.5px;color:#2e7b70;font-weight:700;font-family:'Liberation Serif',serif;left:86px">Healthy</span><i style="left:88px;top:41px;width:14px;height:4px;background:#6a4a2e;border-radius:2px"></i><i style="left:80px;top:42px;width:5px;height:4px;background:transparent;border:1px solid #e8c27a;border-radius:50%"></i><i style="left:42px;top:32px;width:26px;height:1px;background:#8a7a66;"></i><i style="left:50px;top:38px;width:10px;height:1px;background:#8a7a66;"></i><i style="left:44px;top:42px;width:22px;height:1px;background:#b9b0a4;opacity:.55"></i><i style="left:44px;top:44px;width:22px;height:1px;background:#b9b0a4;opacity:.55"></i><i style="left:44px;top:46px;width:15px;height:1px;background:#b9b0a4;opacity:.55"></i><i style="left:50px;top:53px;width:10px;height:1px;background:#8a7a66;"></i><i style="left:49px;top:58px;width:12px;height:1px;background:#8a7a66;opacity:.55"></i><i style="left:49px;top:60px;width:8px;height:1px;background:#8a7a66;opacity:.55"></i><i style="left:46.7px;top:66.7px;width:2.6px;height:2.6px;background:#6a4a2e;border-radius:50%;"></i><i style="left:51.7px;top:66.7px;width:2.6px;height:2.6px;background:#6a4a2e;border-radius:50%;"></i><i style="left:56.7px;top:66.7px;width:2.6px;height:2.6px;background:#6a4a2e;border-radius:50%;"></i><i style="left:61.7px;top:66.7px;width:2.6px;height:2.6px;background:#6a4a2e;border-radius:50%;"></i><i style="left:3px;top:35px;width:16px;height:1px;background:#6a5a4a;"></i><i style="left:3px;top:39px;width:12px;height:1px;background:#aaa;opacity:.55"></i><i style="left:3px;top:41px;width:8px;height:1px;background:#aaa;opacity:.55"></i><i style="left:3px;top:46px;width:12px;height:1px;background:#aaa;opacity:.55"></i><i style="left:3px;top:48px;width:8px;height:1px;background:#aaa;opacity:.55"></i><i style="left:27px;top:39px;width:3px;height:1px;background:#777;"></i><i style="left:27px;top:46px;width:3px;height:1px;background:#777;"></i><i style="left:37px;top:0px;width:0.5px;height:78px;background:#f6f4ef;"></i><i style="left:73px;top:0px;width:0.5px;height:78px;background:#f6f4ef;"></i><b class="n">2</b></div>
  <div class="th" style="left:131px;top:424px"><i style="left:0px;top:0px;width:36px;height:24px;background:#bfbb99;"></i><i style="left:8px;top:12px;width:20px;height:20px;background:#eceae6;border-radius:50%;"></i><i style="left:12px;top:13px;width:12px;height:9px;background:#4f8a3f;border-radius:0 60% 0 60%"></i><i style="left:13px;top:5px;width:13px;height:1px;background:#e6e3cf;"></i><i style="left:40px;top:30px;width:21px;height:42px;background:#e3e3e1;"></i><i style="left:40px;top:62px;width:21px;height:10px;background:#c9c5bd;"></i><i style="left:42px;top:44px;width:4px;height:6px;background:#f0e9da;border-radius:2px 2px 0 0"></i><i style="left:43.5px;top:50px;width:1px;height:16px;background:#444;"></i><i style="left:47px;top:56px;width:9px;height:8px;background:#2b2b2d;border-radius:2px"></i><i style="left:48px;top:64px;width:1px;height:7px;background:#6a4a30;"></i><i style="left:54px;top:64px;width:1px;height:7px;background:#6a4a30;"></i><i style="left:83px;top:11px;width:22px;height:43px;background:#e9ece8;"></i><svg style="left:80px;top:14px" width="28" height="42" viewBox="0 0 28 42"><path d="M16 40C14 30 8 26 4 18 6 10 12 3 20 2c4 4 6 10 4 18-4 6-2 10-4 14-2-4-2-4-4 6Z" fill="#3f8040"/><path d="M6 18c4-2 8-6 12-12M8 24c5-2 10-6 14-14M12 30c4-2 8-5 11-10" stroke="#2a5f2e" stroke-width="1" fill="none"/><path d="M14 6c-4 2-8 8-8 12" stroke="#6cae62" stroke-width="1.500" fill="none"/></svg><span class="t" style="left:75px;top:8px;font-size:4.6px;color:#222;font-weight:700;line-height:5.300px;font-size:4.300px">Natural<br>Sustainable</span><i style="left:75px;top:5px;width:13px;height:1px;background:#c9c49a;"></i><i style="left:73px;top:60px;width:37px;height:11px;background:#dcd8bd;"></i><i style="left:75px;top:53.0px;width:13px;height:1px;background:#333;opacity:.55"></i><i style="left:75px;top:55.5px;width:9px;height:1px;background:#333;opacity:.55"></i><i style="left:76px;top:63px;width:30px;height:1px;background:#f3f1e4;opacity:.55"></i><i style="left:76px;top:65px;width:30px;height:1px;background:#f3f1e4;opacity:.55"></i><i style="left:76px;top:67px;width:21px;height:1px;background:#f3f1e4;opacity:.55"></i><i style="left:40px;top:14px;width:22px;height:1px;background:#d9d6be;opacity:.55"></i><i style="left:40px;top:16px;width:22px;height:1px;background:#d9d6be;opacity:.55"></i><i style="left:40px;top:18px;width:15px;height:1px;background:#d9d6be;opacity:.55"></i><i style="left:47px;top:35px;width:9px;height:1px;background:#333;"></i><i style="left:47px;top:38px;width:11px;height:1px;background:#999;opacity:.55"></i><i style="left:47px;top:40px;width:7px;height:1px;background:#999;opacity:.55"></i><i style="left:47px;top:43px;width:9px;height:1px;background:#333;"></i><i style="left:47px;top:47px;width:11px;height:1px;background:#999;opacity:.55"></i><i style="left:47px;top:49px;width:11px;height:1px;background:#999;opacity:.55"></i><i style="left:47px;top:51px;width:7px;height:1px;background:#999;opacity:.55"></i><i style="left:47px;top:57px;width:13px;height:1px;background:#333;"></i><i style="left:12px;top:38px;width:12px;height:1.2px;background:#444;"></i><i style="left:10px;top:42px;width:16px;height:1px;background:#b5b5b5;opacity:.55"></i><i style="left:10px;top:44px;width:11px;height:1px;background:#b5b5b5;opacity:.55"></i><i style="left:12px;top:51px;width:12px;height:1.2px;background:#444;"></i><i style="left:10px;top:55px;width:16px;height:1px;background:#b5b5b5;opacity:.55"></i><i style="left:10px;top:57px;width:11px;height:1px;background:#b5b5b5;opacity:.55"></i><i style="left:11px;top:64px;width:14px;height:1.2px;background:#444;"></i><i style="left:10px;top:68px;width:16px;height:1px;background:#b5b5b5;opacity:.55"></i><i style="left:10px;top:70px;width:11px;height:1px;background:#b5b5b5;opacity:.55"></i><i style="left:17px;top:35px;width:2px;height:1px;background:#aaa;"></i><i style="left:17px;top:48px;width:2px;height:1px;background:#aaa;"></i><i style="left:17px;top:61px;width:2px;height:1px;background:#aaa;"></i><b class="n">2</b></div>
  <div class="th" style="left:13px;top:508px"><i style="left:0px;top:0px;width:73px;height:78px;background:#c9a07d;"></i><i style="left:0px;top:0px;width:36px;height:19px;background:#3b3f36;"></i><i style="left:0px;top:68px;width:36px;height:10px;background:#3b3f36;"></i><span class="t" style="left:4px;top:5px;font-size:5px;color:#d9b48f;line-height:6px">Health and<br>Fitness</span><span class="t" style="left:4px;top:71.5px;font-size:3px;color:#d9cfc2;font-style:italic">Begin your journey today!</span><span class="t" style="left:7px;top:25.5px;font-size:3.3px;color:#2b2b2b;font-weight:700">Meet your goals!</span><i style="left:7.2px;top:31.7px;width:3.6px;height:3.6px;background:#2f332c;border-radius:50%;"></i><i style="left:13px;top:33.0px;width:13px;height:1px;background:#6f5a45;"></i><i style="left:7.2px;top:38.300000000000004px;width:3.6px;height:3.6px;background:#2f332c;border-radius:50%;"></i><i style="left:13px;top:39.6px;width:13px;height:1px;background:#6f5a45;"></i><i style="left:7.2px;top:44.900000000000006px;width:3.6px;height:3.6px;background:#2f332c;border-radius:50%;"></i><i style="left:13px;top:46.2px;width:13px;height:1px;background:#6f5a45;"></i><i style="left:7.2px;top:51.5px;width:3.6px;height:3.6px;background:#2f332c;border-radius:50%;"></i><i style="left:13px;top:52.8px;width:13px;height:1px;background:#6f5a45;"></i><i style="left:7.2px;top:58.1px;width:3.6px;height:3.6px;background:#2f332c;border-radius:50%;"></i><i style="left:13px;top:59.4px;width:13px;height:1px;background:#6f5a45;"></i><i style="left:73px;top:0px;width:37px;height:57px;background:#a9a9a9;background:linear-gradient(90deg,#7a7a7a 0,#b9b9b9 35%,#e6e6e6 70%,#c9c9c9 100%)"></i><i style="left:73px;top:40px;width:37px;height:17px;background:#555;opacity:.55"></i><i style="left:85px;top:6px;width:16px;height:16px;background:#e9e9e9;border-radius:50%;"></i><i style="left:86px;top:12px;width:12px;height:14px;background:#c9c9c9;border-radius:40%"></i><i style="left:82px;top:26px;width:26px;height:22px;background:#f1f1f1;border-radius:8px 8px 0 0"></i><i style="left:73px;top:0px;width:10px;height:40px;background:#5a5a5a;opacity:.6"></i><i style="left:78px;top:36px;width:18px;height:12px;background:#6a6a6a;border-radius:5px"></i><i style="left:73px;top:57px;width:37px;height:21px;background:#3b3f36;"></i><span class="t" style="left:76px;top:59px;font-size:5.3px;color:#c9a07d;line-height:6px">RON<br>SWANSON</span><span class="t" style="left:76px;top:72px;font-size:3px;color:#b9b9a9;">Personal Trainer</span><i style="left:47px;top:30px;width:3px;height:9px;background:#f3f3f3;border-radius:1.500px"></i><i style="left:60px;top:30px;width:3px;height:9px;background:#f3f3f3;border-radius:1.500px"></i><i style="left:50px;top:33.5px;width:10px;height:2px;background:#3a3a3a;"></i><i style="left:45px;top:32px;width:2px;height:5px;background:#ddd;border-radius:1px"></i><i style="left:63px;top:32px;width:2px;height:5px;background:#ddd;border-radius:1px"></i><span class="t" style="left:43px;top:43px;font-size:3.2px;color:#2b2b2b;font-weight:700">RON SWANSON</span><i style="left:48px;top:48px;width:13px;height:0.8px;background:#6f5a45;"></i><i style="left:51px;top:59px;width:8px;height:1px;background:#3a3a3a;"></i><i style="left:46px;top:63px;width:18px;height:1px;background:#7a6450;opacity:.55"></i><i style="left:46px;top:65px;width:18px;height:1px;background:#7a6450;opacity:.55"></i><i style="left:46px;top:67px;width:18px;height:1px;background:#7a6450;opacity:.55"></i><i style="left:46px;top:69px;width:12px;height:1px;background:#7a6450;opacity:.55"></i><b class="n">2</b></div>
  <div class="th" style="left:131px;top:508px"><i style="left:0px;top:0px;width:36px;height:78px;background:#e9542b;"></i><i style="left:36px;top:0px;width:37px;height:78px;background:#d2e9d9;"></i><i style="left:0px;top:38px;width:36px;height:8px;background:#d2e9d9;"></i><svg style="left:73px;top:0" width="37" height="78" viewBox="0 0 37 78"><rect width="37" height="78" fill="#ecebe8"/><path d="M0 0H37V14L14 30 0 12Z" fill="#a38a72"/><path d="M0 12 14 30 0 40Z" fill="#8a7460"/><path d="M0 38 37 54V64L0 46Z" fill="#d2e9d9"/><path d="M0 46 37 64V78H0Z" fill="#e9542b"/><path d="M17 18c2-1 4 0 4 2l1 6 2 10-3 2 2 14h-3l-4-12-6-3 2-5 5 1Z" fill="#25252a"/><circle cx="18.500" cy="17" r="2.300" fill="#d9a88c"/><path d="M20 15c3-2 6-2 8-5" stroke="#b9753a" stroke-width="1.500" fill="none"/><rect x="16" y="21" width="6" height="6" rx="2" fill="#9aa0a3"/></svg><span class="t" style="left:8px;top:28px;font-size:6.5px;color:#fff;font-weight:700;transform:scaleX(.72);transform-origin:0 0">LET'S GO!</span><i style="left:3px;top:3px;width:6px;height:1.2px;background:#ffd9c9;"></i><i style="left:3px;top:11px;width:28px;height:1px;background:#f6a98f;"></i><i style="left:3px;top:19px;width:7px;height:1.2px;background:#ffd9c9;"></i><i style="left:3px;top:24px;width:27px;height:1px;background:#f6a98f;"></i><i style="left:3px;top:7px;width:27px;height:1px;background:#f6a98f;"></i><i style="left:3px;top:15px;width:8px;height:1.2px;background:#ffd9c9;"></i><i style="left:3px;top:52px;width:14px;height:1.2px;background:#ffd9c9;"></i><i style="left:3px;top:57px;width:22px;height:1px;background:#f39c80;opacity:.55"></i><i style="left:3px;top:59px;width:22px;height:1px;background:#f39c80;opacity:.55"></i><i style="left:3px;top:61px;width:22px;height:1px;background:#f39c80;opacity:.55"></i><i style="left:3px;top:63px;width:22px;height:1px;background:#f39c80;opacity:.55"></i><i style="left:3px;top:65px;width:22px;height:1px;background:#f39c80;opacity:.55"></i><i style="left:3px;top:67px;width:22px;height:1px;background:#f39c80;opacity:.55"></i><i style="left:3px;top:69px;width:22px;height:1px;background:#f39c80;opacity:.55"></i><i style="left:3px;top:71px;width:15px;height:1px;background:#f39c80;opacity:.55"></i><i style="left:52px;top:27px;width:5px;height:1.5px;background:#e9542b;"></i><span class="t" style="left:50px;top:29.5px;font-size:3.8px;color:#e9542b;font-weight:700">NIKE</span><i style="left:47px;top:36px;width:15px;height:1px;background:#4a6a58;"></i><i style="left:41px;top:40px;width:27px;height:1px;background:#9ab5a4;opacity:.55"></i><i style="left:41px;top:42px;width:27px;height:1px;background:#9ab5a4;opacity:.55"></i><i style="left:41px;top:44px;width:18px;height:1px;background:#9ab5a4;opacity:.55"></i><i style="left:47.2px;top:48.2px;width:3.6px;height:3.6px;background:#e9542b;border-radius:50%;"></i><i style="left:53.2px;top:48.2px;width:3.6px;height:3.6px;background:#e9542b;border-radius:50%;"></i><i style="left:59.2px;top:48.2px;width:3.6px;height:3.6px;background:#e9542b;border-radius:50%;"></i><i style="left:47px;top:55px;width:16px;height:1px;background:#9ab5a4;"></i><i style="left:50.5px;top:1.5px;width:1.0px;height:1.0px;background:#e9a080;border-radius:50%;"></i><i style="left:50.5px;top:4.5px;width:1.0px;height:1.0px;background:#e9a080;border-radius:50%;"></i><i style="left:50.5px;top:7.5px;width:1.0px;height:1.0px;background:#e9a080;border-radius:50%;"></i><i style="left:53.5px;top:1.5px;width:1.0px;height:1.0px;background:#e9a080;border-radius:50%;"></i><i style="left:53.5px;top:4.5px;width:1.0px;height:1.0px;background:#e9a080;border-radius:50%;"></i><i style="left:53.5px;top:7.5px;width:1.0px;height:1.0px;background:#e9a080;border-radius:50%;"></i><i style="left:56.5px;top:1.5px;width:1.0px;height:1.0px;background:#e9a080;border-radius:50%;"></i><i style="left:56.5px;top:4.5px;width:1.0px;height:1.0px;background:#e9a080;border-radius:50%;"></i><i style="left:56.5px;top:7.5px;width:1.0px;height:1.0px;background:#e9a080;border-radius:50%;"></i><i style="left:59.5px;top:1.5px;width:1.0px;height:1.0px;background:#e9a080;border-radius:50%;"></i><i style="left:59.5px;top:4.5px;width:1.0px;height:1.0px;background:#e9a080;border-radius:50%;"></i><i style="left:59.5px;top:7.5px;width:1.0px;height:1.0px;background:#e9a080;border-radius:50%;"></i><i style="left:27.5px;top:65.5px;width:1.0px;height:1.0px;background:#f6b8a0;border-radius:50%;"></i><i style="left:27.5px;top:68.5px;width:1.0px;height:1.0px;background:#f6b8a0;border-radius:50%;"></i><i style="left:27.5px;top:71.5px;width:1.0px;height:1.0px;background:#f6b8a0;border-radius:50%;"></i><i style="left:27.5px;top:74.5px;width:1.0px;height:1.0px;background:#f6b8a0;border-radius:50%;"></i><i style="left:30.0px;top:65.5px;width:1.0px;height:1.0px;background:#f6b8a0;border-radius:50%;"></i><i style="left:30.0px;top:68.5px;width:1.0px;height:1.0px;background:#f6b8a0;border-radius:50%;"></i><i style="left:30.0px;top:71.5px;width:1.0px;height:1.0px;background:#f6b8a0;border-radius:50%;"></i><i style="left:30.0px;top:74.5px;width:1.0px;height:1.0px;background:#f6b8a0;border-radius:50%;"></i><i style="left:32.5px;top:65.5px;width:1.0px;height:1.0px;background:#f6b8a0;border-radius:50%;"></i><i style="left:32.5px;top:68.5px;width:1.0px;height:1.0px;background:#f6b8a0;border-radius:50%;"></i><i style="left:32.5px;top:71.5px;width:1.0px;height:1.0px;background:#f6b8a0;border-radius:50%;"></i><i style="left:32.5px;top:74.5px;width:1.0px;height:1.0px;background:#f6b8a0;border-radius:50%;"></i><i style="left:35.0px;top:65.5px;width:1.0px;height:1.0px;background:#f6b8a0;border-radius:50%;"></i><i style="left:35.0px;top:68.5px;width:1.0px;height:1.0px;background:#f6b8a0;border-radius:50%;"></i><i style="left:35.0px;top:71.5px;width:1.0px;height:1.0px;background:#f6b8a0;border-radius:50%;"></i><i style="left:35.0px;top:74.5px;width:1.0px;height:1.0px;background:#f6b8a0;border-radius:50%;"></i><i style="left:50.5px;top:69.5px;width:1.0px;height:1.0px;background:#e9a080;border-radius:50%;"></i><i style="left:50.5px;top:72.5px;width:1.0px;height:1.0px;background:#e9a080;border-radius:50%;"></i><i style="left:50.5px;top:75.5px;width:1.0px;height:1.0px;background:#e9a080;border-radius:50%;"></i><i style="left:53.5px;top:69.5px;width:1.0px;height:1.0px;background:#e9a080;border-radius:50%;"></i><i style="left:53.5px;top:72.5px;width:1.0px;height:1.0px;background:#e9a080;border-radius:50%;"></i><i style="left:53.5px;top:75.5px;width:1.0px;height:1.0px;background:#e9a080;border-radius:50%;"></i><i style="left:56.5px;top:69.5px;width:1.0px;height:1.0px;background:#e9a080;border-radius:50%;"></i><i style="left:56.5px;top:72.5px;width:1.0px;height:1.0px;background:#e9a080;border-radius:50%;"></i><i style="left:56.5px;top:75.5px;width:1.0px;height:1.0px;background:#e9a080;border-radius:50%;"></i><i style="left:59.5px;top:69.5px;width:1.0px;height:1.0px;background:#e9a080;border-radius:50%;"></i><i style="left:59.5px;top:72.5px;width:1.0px;height:1.0px;background:#e9a080;border-radius:50%;"></i><i style="left:59.5px;top:75.5px;width:1.0px;height:1.0px;background:#e9a080;border-radius:50%;"></i><i style="left:88px;top:66px;width:8px;height:3px;background:#fff;border-radius:1px"></i><span class="t" style="left:85px;top:70px;font-size:4px;color:#fff;font-weight:700">WOR</span><b class="n">2</b></div>
  <div class="th" style="left:13px;top:592px"><i style="left:0px;top:0px;width:37px;height:78px;background:#fafafa;"></i><i style="left:37px;top:0px;width:36px;height:78px;background:#2d3037;"></i><i style="left:73px;top:0px;width:37px;height:78px;background:#f3f1ec;"></i></div>
  <div class="th" style="left:131px;top:592px"><i style="left:0px;top:0px;width:37px;height:78px;background:#2c5ed0;"></i><i style="left:37px;top:0px;width:40px;height:78px;background:#3a3c40;"></i><i style="left:77px;top:0px;width:33px;height:78px;background:#565a6a;"></i></div>
</div>

<!-- ================= CANVAS ================= -->
<div id="cv">
  <div class="t" id="pglab" style="left:58px;top:43px;font-size:10.200px;color:#d8d8d8;letter-spacing:-.45px">Page 1</div>
  <!-- page tools -->
  <div class="abs" style="left:429.7px;top:35.300px;width:17px;height:17px;border-radius:50%;background:#fff"></div>
  <div class="abs" style="left:459.500px;top:34px;width:1px;height:20px;background:#444"></div>
  <svg style="left:474px;top:36px" width="14" height="15" viewBox="0 0 14 15" fill="none" stroke="#8c8c8c" stroke-width="1.500" stroke-linejoin="round"><rect x="4.300" y="1.200" width="8" height="10" rx="2"/><path d="M9.600 13.800H4.400A2.600 2.600 0 0 1 1.800 11.200V4.600"/></svg>
  <svg style="left:504px;top:36px" width="14" height="15" viewBox="0 0 14 15" fill="none" stroke="#8c8c8c" stroke-width="1.500" stroke-linejoin="round" stroke-linecap="round"><path d="M6.200 13.500H3.400A1.800 1.800 0 0 1 1.600 11.700V3.300A1.800 1.800 0 0 1 3.400 1.500H8L11.400 5v2.200"/><path d="M9.600 9.200v4.400M7.400 11.400h4.400"/></svg>
  <svg style="left:533px;top:36px" width="15" height="15" viewBox="0 0 15 15" fill="none" stroke="#8c8c8c" stroke-width="1.500" stroke-linejoin="round" stroke-linecap="round"><path d="M1.500 3.800h12M5 3.600V2.200a.8.800 0 0 1 .8-.8h3.400a.8.800 0 0 1 .8.800v1.400M3 4v8.200a1.500 1.500 0 0 0 1.500 1.500h6A1.500 1.500 0 0 0 12 12.200V4M6.200 6.600v4.200M8.800 6.600v4.200"/></svg>

  <!-- ===== page ===== -->
  <div id="page" class="abs" style="left:58px;top:61px;width:491px;height:347px;background:#111014;overflow:hidden">
    <!-- photo -->
    <svg id="photo" style="left:0;top:0" width="164" height="347" viewBox="0 0 164 347">
      <defs>
        <linearGradient id="pbg" x1="0" y1="0" x2="1" y2="1"><stop offset="0" stop-color="#b3966b"/><stop offset=".5" stop-color="#ae8e63"/><stop offset="1" stop-color="#a98959"/></linearGradient>
        <linearGradient id="skin" x1="0" y1="0" x2="1" y2="0"><stop offset="0" stop-color="#3d2219"/><stop offset=".45" stop-color="#6a3f2c"/><stop offset="1" stop-color="#4a2a1e"/></linearGradient>
        <linearGradient id="arm" x1="0" y1="0" x2="1" y2="0"><stop offset="0" stop-color="#341c13"/><stop offset=".55" stop-color="#5c3625"/><stop offset="1" stop-color="#7a4a33"/></linearGradient>
        <filter id="bl2" x="-30%" y="-30%" width="160%" height="160%"><feGaussianBlur stdDeviation="2.200"/></filter><filter id="bl1" x="-30%" y="-30%" width="160%" height="160%"><feGaussianBlur stdDeviation="1.100"/></filter><clipPath id="fc"><path d="M25.600 62C25 50 34 44 51 44 68 44 78.500 50 78 62 78.500 74 77 86 74 95 70 103 60 111.500 51 111.500 42 111.500 32 103 28 95 25.500 86 25 74 25.600 62Z"/></clipPath><pattern id="knit" width="2.400" height="2.400" patternUnits="userSpaceOnUse"><rect width="2.400" height="2.400" fill="#d2d4cb"/><rect x="0" y="0" width="1.200" height="1.400" fill="#8e9087"/></pattern><pattern id="knitL" width="3.200" height="3.200" patternUnits="userSpaceOnUse"><rect width="3.200" height="3.200" fill="#e4e5dd"/><rect x="0" y="0" width="1" height="1" fill="#c3c5bb"/></pattern>
      </defs>
      <rect width="164" height="347" fill="url(#pbg)"/>
      <!-- arm -->
      <path d="M98 215 127.500 222C128 240 126 252 123 264 120 278 118 288 116.500 295 112 312 107 330 103.500 347H82C85.500 330 88.500 312 91 296 92.500 282 94 270 95 262 96 246 97 232 98 215Z" fill="url(#arm)"/>
      <path d="M114 228c5 14 4 34-2 56" stroke="#8a563c" stroke-width="6" fill="none" opacity=".6" stroke-linecap="round" filter="url(#bl2)"/>
      <!-- trousers -->
      <path d="M0 280C20 292 50 290 80.700 272 84 282 88 290 88.500 299 88 316 86 332 85 347H0Z" fill="#b0874e"/>
      <path d="M26 296 24 347M72 290c4 8 6 14 6 22" stroke="#9a6f3e" stroke-width="1.200" fill="none"/>
      <path d="M80 280c6 14 7 40 3 67h6c2-20 2-44-2-60Z" fill="#8f6537" opacity=".7"/>
      <!-- belt -->
      <path d="M0 274C14 282 26 285 38 284 54 283 70 275 80.700 262V279C70 290 54 296 38 297.500 26 298 12 294 0 288Z" fill="#111112"/>
      <rect x="15" y="287" width="11" height="13" rx="1" fill="none" stroke="#6f6f72" stroke-width="1.500" transform="rotate(8 20 293)"/>
      <path d="M64 279l1.500 11" stroke="#b0874e" stroke-width="2.500"/>
      <!-- shirt body -->
      <clipPath id="sh"><path d="M0 112C8 111 16 111 24 111.500L50 137 74 113C80 116 84 121 86 125.500 96 132 110 142 120 151 126 157 129 162 129.500 168V224L98.700 216 97.400 190C96 215 94 240 91 257L80.700 260C80 266 76 270 70 273 56 281 40 284 26 284 16 283 6 278 0 274Z"/></clipPath>
      <g clip-path="url(#sh)">
        <rect x="0" y="105" width="135" height="185" fill="url(#knitL)"/>
        <g fill="url(#knit)">
          <path d="M2 112H11L13 285H3Z"/>
          <path d="M20 150 31 150 26 285 14 285Z"/>
          <path d="M44 150 58 144 56 285 40 285Z"/>
          <path d="M66 128 80 122 82 262 68 275Z"/>
          <path d="M90 128 99 136 96 260 88 262Z" opacity=".7"/>
          <path d="M104 140 118 150 120 225 104 220Z"/>
        </g>
        <path d="M0 120C10 150 14 200 10 274L0 274Z" fill="#8f8b80" opacity=".4" filter="url(#bl2)"/>
        <path d="M97.400 186C96 215 94 240 91 257L84 259C88 236 90 210 90 180Z" fill="#8a867a" opacity=".3" filter="url(#bl1)"/>
        <path d="M20 200C40 225 60 245 86 258" stroke="#f6f4ea" stroke-width="3" fill="none" opacity=".6" filter="url(#bl1)"/>
        <path d="M98 168V216" stroke="#8a867a" stroke-width="2.500" opacity=".45" filter="url(#bl1)"/>
      </g>
      <!-- cuff -->
      <path d="M98.300 207 129.500 215V224.500L98.700 216.500Z" fill="#f0ede1"/>
      <!-- placket -->
      <path d="M35 134 47 137 38.500 192C38 195.500 29 195.500 28.500 191.500Z" fill="#f1eee2"/>
      <circle cx="37" cy="166" r="1.500" fill="#d4d0c2"/><circle cx="33.500" cy="186" r="1.500" fill="#d4d0c2"/>
      <!-- neck -->
      <path d="M29.500 96C30 110 30 118 27 124L50 139 73 122C72 114 72.500 106 74 96Z" fill="#4a2a1e"/>
      <path d="M34 112C40 122 50 128 60 126 66 124 70 118 73 110L74 96 30 98Z" fill="#2f1a12" opacity=".8"/>
      <!-- collar -->
      <path d="M24 111.500C26 120 36 132 50 137L36 138.500 14 134.600C16 126 19 118 24 111.500Z" fill="#f3f0e5"/>
      <path d="M74 113C80 116 84 121 86 125.600L63 154 50 137C60 132 68 124 74 113Z" fill="#f3f0e5"/>
      <path d="M21 78C14.500 74 11.500 64 12.800 55 14 40 22 28 32 22 40 17 50 16 58 17.500 70 20 80 28 85 40 88 48 88.500 58 86.800 66 86 70 85 74 83 76.500L78 74V56H26V76Z" fill="#0c0a09"/>
      <!-- ears -->
      <ellipse cx="24" cy="84" rx="3" ry="7.500" fill="#40241a"/><ellipse cx="80" cy="83.500" rx="3" ry="7.500" fill="#4a2a1e"/>
      <!-- face -->
      <g clip-path="url(#fc)">
        <rect x="20" y="40" width="64" height="76" fill="#613a29"/>
        <ellipse cx="30" cy="84" rx="9" ry="26" fill="#2e1811" filter="url(#bl2)"/>
        <ellipse cx="78" cy="88" rx="6" ry="22" fill="#3a2016" filter="url(#bl2)"/>
        <ellipse cx="52" cy="57" rx="17" ry="7" fill="#8b5a42" filter="url(#bl2)"/>
        <ellipse cx="65" cy="84" rx="7" ry="9" fill="#8f5d44" filter="url(#bl2)"/>
        <ellipse cx="38" cy="85" rx="6" ry="8" fill="#74472f" filter="url(#bl2)"/>
        <ellipse cx="51" cy="78" rx="3.500" ry="9" fill="#94634a" filter="url(#bl1)"/>
        <ellipse cx="51" cy="106" rx="9" ry="4" fill="#7a4a34" filter="url(#bl2)"/>
        <ellipse cx="39" cy="70" rx="7" ry="4" fill="#2a150f" filter="url(#bl1)" opacity=".8"/>
        <ellipse cx="63.500" cy="69" rx="7" ry="4" fill="#2a150f" filter="url(#bl1)" opacity=".8"/>
        <ellipse cx="51" cy="47" rx="30" ry="5" fill="#1a0e0a" filter="url(#bl2)"/>
      </g>
      <!-- brows / eyes / nose / mouth -->
      <path d="M31.500 65.500c4-3 10-3 14-.8M56.500 64.500c4-2.800 10-2.800 14 .2" stroke="#150b08" stroke-width="2.200" fill="none" stroke-linecap="round"/>
      <path d="M33.500 70.500c3-3 8-3 10.500 0-3 2-8 2-10.500 0Z" fill="#d9cdbf"/><path d="M58 69.500c3-3 8-3 10.500 0-3 2-8 2-10.500 0Z" fill="#d9cdbf"/>
      <circle cx="39" cy="70" r="2.100" fill="#120907"/><circle cx="63.500" cy="69" r="2.100" fill="#120907"/>
      <path d="M33 70.200c3-3.200 8.500-3.200 11.500 0M57.500 69.200c3-3.200 8.500-3.200 11.500 0" stroke="#120907" stroke-width="1.100" fill="none"/>
      <path d="M43.500 82.500c1.500-2 3-2 4.500-.8 2 .9 4 .9 6 0 1.500-1.200 3-1.200 4.500.8-1.500 2.500-4 2.500-5.500 1.800-1.500.6-3 .6-4.500 0-1.500.7-4 .7-5-1.800Z" fill="#2a150f" opacity=".85" filter="url(#bl1)"/>
      <path d="M41 93c3-2.500 6.500-3 10-1.800 3.500-1.200 7-.7 10 1.800-3 4-6.500 5.600-10 5.600s-7-1.600-10-5.600Z" fill="#4a2620"/>
      <path d="M41 93c6 1.400 14 1.400 20 0" stroke="#1c0d0a" stroke-width="1.100" fill="none"/>
      <path d="M45 96.500c4 1.600 8 1.600 12 0" stroke="#7a4a3c" stroke-width="1.400" fill="none" opacity=".7" filter="url(#bl1)"/>
      <!-- hair -->
      <path d="M21 78C14.500 74 11.500 64 12.800 55 14 40 22 28 32 22 40 17 50 16 58 17.500 70 20 80 28 85 40 88 48 88.500 58 86.800 66 86 70 85 74 83 76.500 82.500 70 80.500 64 78.500 60 76 51 67 47 52 47 37 47 28.500 51 26 60 24.500 66 23 72 21 78Z" fill="#0c0a09"/><path d="M21 78C14.500 74 11.500 64 12.800 55 14 40 22 28 32 22 40 17 50 16 58 17.500 70 20 80 28 85 40 88 48 88.500 58 86.800 66 86 70 85 74 83 76.500" fill="none" stroke="#0c0a09" stroke-width="1.500" filter="url(#bl1)"/>
      <!-- arrow -->
      <path d="M164 258.400H93" stroke="#fff" stroke-width="1.200"/>
      <path d="M109 242.500C107 251 100 256.500 92.800 258.400 100 260.500 107 266 109 274" stroke="#fff" stroke-width="1.200" fill="none" stroke-linecap="round"/>
    </svg>
    <!-- middle panel -->
    <div class="t pp" id="contact" style="left:221.500px;top:102px;font-size:13px;font-weight:700;letter-spacing:.2px">Contact</div>
    <div class="t pp" id="c1" style="left:202.600px;top:125px;-webkit-text-stroke:.2px #fff;font-size:10px;letter-spacing:.1px">erickrodriguez.com</div>
    <div class="t pp" id="c2" style="left:190px;top:138px;-webkit-text-stroke:.2px #fff;font-size:10px;letter-spacing:.1px">info@erickrodriguez.com</div>
    <div class="t pp" id="c3" style="left:208.500px;top:151.500px;-webkit-text-stroke:.2px #fff;font-size:10px;letter-spacing:.1px">+00 000 000 000</div>
    <svg style="left:203px;top:184px" width="10" height="14" viewBox="0 0 10 14"><path d="M6.300 13.500V7.700h2l.4-2.400H6.300V3.900c0-.8.300-1.200 1.300-1.200h1.200V.6C8.500.55 7.700.5 6.900.5 5 .5 3.800 1.600 3.800 3.600v1.700H1.700v2.400h2.100v5.800Z" fill="#fff"/></svg>
    <svg style="left:238px;top:186px" width="12" height="12" viewBox="0 0 12 12" fill="none" stroke="#fff" stroke-width="1.200"><rect x=".8" y=".8" width="10.400" height="10.400" rx="2.800"/><circle cx="6" cy="6" r="2.500"/><circle cx="9" cy="3" r=".5" fill="#fff" stroke="none"/></svg>
    <svg style="left:275px;top:187.500px" width="13" height="10" viewBox="0 0 13 10"><rect x=".3" y=".4" width="12.400" height="9" rx="2.400" fill="#fff"/><path d="M5.200 2.800v4.400L9 5Z" fill="#111014"/></svg>
    <div class="t pp" id="c4" style="left:206.500px;top:206px;-webkit-text-stroke:.2px #fff;font-size:10px;letter-spacing:.1px">@erick_rodriguez</div>
    <!-- right panel -->
    <div class="abs" style="left:329px;top:0;width:162px;height:347px;background:#fff"></div>
    <svg id="slab" style="left:329px;top:0" width="162" height="347" viewBox="0 0 162 347">
      <g font-family="'DejaVu Serif','Liberation Serif',serif" font-weight="700" font-size="63" fill="#111014" stroke="#111014" stroke-width="5.200" stroke-linejoin="miter">
        <text transform="translate(72 207) rotate(-90)"><tspan x="0.5" textLength="31" lengthAdjust="spacingAndGlyphs">I</tspan><tspan x="33.5" textLength="9" lengthAdjust="spacingAndGlyphs">'</tspan><tspan x="41.5" textLength="65.5" lengthAdjust="spacingAndGlyphs">m</tspan></text>
        <text transform="translate(137 207) rotate(-90)"><tspan x="1" textLength="41" lengthAdjust="spacingAndGlyphs">E</tspan><tspan x="45.5" textLength="28.5" lengthAdjust="spacingAndGlyphs">r</tspan><tspan x="76.5" textLength="22" lengthAdjust="spacingAndGlyphs">i</tspan><tspan x="100.5" textLength="31" lengthAdjust="spacingAndGlyphs">c</tspan><tspan x="133" textLength="46" lengthAdjust="spacingAndGlyphs">k</tspan></text>
      </g>
    </svg>
    <div class="t pp" id="photog" style="left:351px;top:222.500px;font-size:17px;color:#151418;letter-spacing:1.050px">Photographer</div>
    <div class="abs" style="left:329px;top:257.500px;width:162px;height:1px;background:#cfcfcf"></div>
    <div class="t pp" id="quote" style="left:347.500px;top:268.500px;font-size:8.600px;line-height:10.600px;font-style:italic;color:#2a2a2e;-webkit-text-stroke:.15px #2a2a2e;letter-spacing:.28px">“Each constellation<br>is a region of the<br>sky”</div>
    <!-- HI badge -->
    <svg style="left:433.900px;top:284.500px" width="40" height="40" viewBox="-20 -20 40 40"><circle r="16.600" fill="#111014"/><g fill="#111014"><circle cx="16.2" cy="0.0" r="2.400"/><circle cx="15.0" cy="6.2" r="2.400"/><circle cx="11.5" cy="11.5" r="2.400"/><circle cx="6.2" cy="15.0" r="2.400"/><circle cx="0.0" cy="16.2" r="2.400"/><circle cx="-6.2" cy="15.0" r="2.400"/><circle cx="-11.5" cy="11.5" r="2.400"/><circle cx="-15.0" cy="6.2" r="2.400"/><circle cx="-16.2" cy="0.0" r="2.400"/><circle cx="-15.0" cy="-6.2" r="2.400"/><circle cx="-11.5" cy="-11.5" r="2.400"/><circle cx="-6.2" cy="-15.0" r="2.400"/><circle cx="-0.0" cy="-16.2" r="2.400"/><circle cx="6.2" cy="-15.0" r="2.400"/><circle cx="11.5" cy="-11.5" r="2.400"/><circle cx="15.0" cy="-6.2" r="2.400"/></g><text x="-10" y="5.700" textLength="20" lengthAdjust="spacingAndGlyphs" font-family="'DejaVu Serif',serif" font-weight="700" font-size="15" fill="#fff" stroke="#fff" stroke-width=".9">HI</text></svg>
  </div>
  <!-- selection overlays -->
  <div class="abs" style="left:492.500px;top:346.700px;width:38.500px;height:38.500px;border:1px dashed #9aa0a8"></div>
  <div class="abs" style="left:495.500px;top:353.300px;width:32.300px;height:26.500px;border:2px solid #2b78f5"></div>
  <div class="abs hd" style="left:487.200px;top:342.500px"></div><div class="abs hd" style="left:526px;top:342.500px"></div>
  <div class="abs hd" style="left:487.200px;top:380.500px"></div><div class="abs hd" style="left:526px;top:380.500px"></div>
  <!-- rotate handle -->
  <div class="abs" style="left:502.900px;top:305.200px;width:17px;height:17px;border-radius:50%;background:#3b71e6"></div>
  <svg style="left:506.400px;top:308.700px" width="10" height="10" viewBox="0 0 10 10" fill="none" stroke="#fff" stroke-width="1.400" stroke-linecap="round" stroke-linejoin="round"><g transform="translate(10 0) scale(-1 1)"><path d="M8.600 5A3.600 3.600 0 1 1 7.300 2.200"/><path d="M7.600.6v2h-2"/></g></svg>
  <!-- ungroup + side buttons -->
  <div class="t" id="ungroup" style="left:534px;top:273px;width:53px;height:20px;border-radius:10px;background:#3b71e6;font-size:10px;font-weight:700;line-height:21.500px;text-align:center;letter-spacing:-.25px">Ungroup</div>
  <div class="abs rb" style="top:295.700px"></div><div class="abs rb" style="top:319.300px"></div><div class="abs rb" style="top:342.600px"></div><div class="abs rb" style="top:366.200px"></div>
  <svg style="left:540px;top:301.200px" width="9.500" height="9" viewBox="0 0 11 10" fill="none" stroke="#d8d8d8" stroke-width="1.200" stroke-linejoin="round"><rect x=".8" y=".8" width="9.400" height="3.400" rx="1"/><rect x="2.300" y="6" width="6.400" height="3.200" rx="1"/></svg>
  <svg style="left:540px;top:324px" width="9.500" height="10.500" viewBox="0 0 11 12" fill="none" stroke="#d8d8d8" stroke-width="1.100" stroke-linecap="round" stroke-linejoin="round"><path d="M1 3h9M3.700 2.800V1.700a.6.600 0 0 1 .6-.6h2.400a.6.600 0 0 1 .6.600v1.100M2.200 3.200v6.600a1.100 1.100 0 0 0 1.100 1.100h4.400a1.100 1.100 0 0 0 1.100-1.100V3.200M4.500 5.300v3.300M6.500 5.300v3.300"/></svg>
  <svg style="left:540px;top:347px" width="9.500" height="10.500" viewBox="0 0 11 12" fill="none" stroke="#d8d8d8" stroke-width="1.200" stroke-linecap="round" stroke-linejoin="round"><rect x="1" y="5.300" width="9" height="5.900" rx="1.200"/><path d="M3.200 5.200V3.400a2.300 2.300 0 0 1 4.500-.6"/></svg>
  <svg style="left:539.700px;top:374.900px" width="10" height="2.700" viewBox="0 0 11 3" fill="#e8e8e8"><circle cx="1.500" cy="1.500" r="1.200"/><circle cx="5.500" cy="1.500" r="1.200"/><circle cx="9.500" cy="1.500" r="1.200"/></svg>
  <!-- collapse handle -->
  <svg style="left:0;top:266px" width="10" height="66" viewBox="0 0 10 66"><path d="M0 0C0 8 9 9 9 18V48C9 57 0 58 0 66Z" fill="#313131"/></svg>
  <!-- scrollbars -->
  <svg style="left:611px;top:5px" width="8" height="7" viewBox="0 0 8 7"><path d="M4 .5 7.600 6H.4Z" fill="#5a5a5a"/></svg>
  <div class="abs" style="left:611px;top:16px;width:7px;height:360px;border-radius:3.500px;background:#4d4d4d"></div>
  <svg style="left:611px;top:414px" width="8" height="7" viewBox="0 0 8 7"><path d="M.4 .8H7.600L4 6.300Z" fill="#5a5a5a"/></svg>
  <svg style="left:598px;top:425.500px" width="7" height="9" viewBox="0 0 7 9"><path d="M.5 .5 6.500 4.500 .5 8.500Z" fill="#5a5a5a"/></svg>
  <svg style="left:4px;top:425.500px" width="7" height="9" viewBox="0 0 7 9"><path d="M6.500 .5 .5 4.500 6.500 8.500Z" fill="#5a5a5a"/></svg>
    <!-- floating toolbar -->
  <div id="tb" class="abs" style="left:1px;top:386px;width:539px;height:33px;border-radius:6px;background:rgba(63,63,63,.9);-webkit-backdrop-filter:blur(7px);backdrop-filter:blur(7px)">
    <div class="t" id="fontname" style="left:12.500px;top:11.500px;font-family:'DejaVu Serif','Liberation Serif',serif;font-weight:700;font-size:10.800px;color:#d8d8d8;-webkit-text-stroke:.8px #d8d8d8;letter-spacing:-.05px">Alfa Slab One</div>
    <svg style="left:98.500px;top:14.500px" width="8" height="5" viewBox="0 0 8 5" fill="none" stroke="#d0d0d0" stroke-width="1.200" stroke-linecap="round" stroke-linejoin="round"><path d="M.8.800 4 4l3.200-3.200"/></svg>
    <div class="abs" style="left:116.500px;top:16px;width:10px;height:1.600px;background:#e6e6e6"></div>
    <div class="t" id="fsize" style="left:136.500px;top:9.500px;font-size:14.800px;font-weight:700;color:#fff">40</div>
    <div class="abs" style="left:163px;top:16px;width:11px;height:1.600px;background:#e6e6e6"></div><div class="abs" style="left:167.700px;top:11.300px;width:1.600px;height:11px;background:#e6e6e6"></div>
    <div class="t" id="tbB" style="left:189.500px;top:9.500px;font-size:14.500px;font-weight:700;color:#e2e2e2">B</div>
    <div class="t" id="tbI" style="left:223px;top:9.500px;font-size:14.500px;font-style:italic;color:#8c8c8c;font-family:'Liberation Serif',serif;font-weight:700">I</div>
    <svg style="left:253px;top:10px" width="17" height="13" viewBox="0 0 17 13" fill="#f0f0f0"><rect x="0" y="0" width="17" height="1.700" rx=".8"/><rect x="2.500" y="3.700" width="12" height="1.700" rx=".8"/><rect x="0" y="7.400" width="17" height="1.700" rx=".8"/><rect x="2.500" y="11.100" width="12" height="1.700" rx=".8"/></svg>
    <svg style="left:286px;top:10px" width="17" height="13" viewBox="0 0 17 13" fill="#f0f0f0"><circle cx="1.300" cy="1.400" r="1.300"/><circle cx="1.300" cy="6.500" r="1.300"/><circle cx="1.300" cy="11.600" r="1.300"/><rect x="4.600" y=".5" width="12.400" height="1.800" rx=".9"/><rect x="4.600" y="5.600" width="12.400" height="1.800" rx=".9"/><rect x="4.600" y="10.700" width="12.400" height="1.800" rx=".9"/></svg>
    <div class="abs" style="left:314.500px;top:8.500px;width:16.500px;height:16.500px;border-radius:50%;background:#fff"></div>
    <div class="abs" style="left:341.500px;top:7px;width:1px;height:19px;background:#555"></div>
    <svg style="left:353px;top:11.500px" width="18" height="10" viewBox="0 0 18 10" fill="none" stroke="#e4e4e4" stroke-width="1.500" stroke-linecap="round"><path d="M7.300 1.200H4.800a3.800 3.800 0 0 0 0 7.600h2.500M10.700 1.200h2.500a3.800 3.800 0 0 1 0 7.600h-2.500M5.600 5h6.800"/></svg>
    <svg style="left:384.500px;top:9.500px" width="14" height="14" viewBox="0 0 14 14" fill="none" stroke="#e4e4e4" stroke-width="1.200" stroke-linecap="round" stroke-linejoin="round"><path d="M9.600 2.600l1.800 1.800L5 10.800l-2.400.6.600-2.400Z"/><path d="M2 1v2M1 2h2M5 .8v1.400M4.300 1.500h1.400M1.800 5.200v1.400M1.100 5.900h1.400"/></svg>
    <div class="t" id="aiw" style="left:401.500px;top:10.500px;letter-spacing:-.15px;font-size:11.600px;font-weight:700;color:#dedede">AI writer</div>
    <svg style="left:460.500px;top:9.500px" width="13" height="14" viewBox="0 0 13 14" fill="none" stroke="#e4e4e4" stroke-width="1.300" stroke-linecap="round" stroke-linejoin="round"><path d="M1 3.300h11M4.200 3.100V1.900a.8.800 0 0 1 .8-.8h3a.8.800 0 0 1 .8.800v1.200M2.400 3.500v8a1.400 1.400 0 0 0 1.400 1.400h5.400a1.400 1.400 0 0 0 1.400-1.400v-8M5.200 6v4.200M7.800 6v4.200"/></svg>
    <svg style="left:486px;top:9px" width="14" height="16" viewBox="0 0 14 16" fill="none" stroke="#e4e4e4" stroke-width="1.300" stroke-linecap="round" stroke-linejoin="round"><rect x="1" y="1" width="9.500" height="4.200" rx="1.200"/><path d="M10.500 3.100h1.300a1 1 0 0 1 1 1v2.300a1 1 0 0 1-1 1H6.600a1 1 0 0 0-1 1v1"/><rect x="4.500" y="9.600" width="2.300" height="5.200" rx=".8"/></svg>
    <svg style="left:512.500px;top:15px" width="15" height="4" viewBox="0 0 15 4" fill="#e4e4e4"><circle cx="1.700" cy="2" r="1.500"/><circle cx="7.500" cy="2" r="1.500"/><circle cx="13.300" cy="2" r="1.500"/></svg>
  </div>
</div>
<!-- ================= BOTTOM PANEL ================= -->
<div id="bot">
  <svg style="left:278px;top:-10px" width="64" height="11" viewBox="0 0 64 11"><path d="M0 11C8 11 9 1 17 1H47C55 1 56 11 64 11Z" fill="#202020"/><path d="M27.500 4.300 32 8.500l4.500-4.200" fill="none" stroke="#ededed" stroke-width="1.500" stroke-linecap="round" stroke-linejoin="round"/></svg>
  <!-- page 1 thumb -->
  <div class="abs" style="left:18.500px;top:16.500px;width:116px;height:83px;border-radius:4px;background:#3b71e6"></div>
  <div class="abs" id="p1" style="left:20.500px;top:18.500px;width:112px;height:79px;border-radius:2px;overflow:hidden;background:#1c2542">
    <svg style="left:0;top:0" width="112" height="79" viewBox="0 0 112 79">
      <rect width="37.500" height="79" fill="#a89484"/>
      <g transform="translate(-2 0)"><path d="M0 28C4 26 8 26 11 27L14 31 18 27C24 29 29 34 30 40L31 52 24 50 23 62 19 64 0 66Z" fill="#d9dbe6"/>
      <path d="M23 52 30 54C29 62 27 70 25 79H20C21 70 22 60 23 52Z" fill="#3d2a28"/>
      <path d="M0 66 19 63 21 79H0Z" fill="#9f8468"/><path d="M0 63 19 60V64L0 67Z" fill="#15151a"/>
      <path d="M8 22h9l.5 6-4 3.500-5-3.500Z" fill="#3a2622"/>
      <ellipse cx="12.500" cy="18" rx="6" ry="8" fill="#5a3a30"/>
      <path d="M5 18C3 10 7 4 13 4s10 5 8 13c-1-4-3-6-8-6s-7 2-8 7Z" fill="#0e0c10"/></g>
      <path d="M37.500 59H22" stroke="#e6e9f6" stroke-width=".5"/>
      <rect x="74.500" width="37.500" height="79" fill="#d6defb"/>
      <g font-family="'DejaVu Serif',serif" font-weight="700" font-size="16" fill="#1a2140" stroke="#1a2140" stroke-width=".9">
        <text transform="translate(92.500 46.500) rotate(-90)" textLength="24" lengthAdjust="spacingAndGlyphs">I'm</text>
        <text transform="translate(107 46.500) rotate(-90)" textLength="41" lengthAdjust="spacingAndGlyphs">Erick</text>
      </g>
      <text x="79.500" y="52.800" font-size="4.400" fill="#1a2140" textLength="27.500" lengthAdjust="spacingAndGlyphs">Photographer</text>
      <path d="M74.500 58.800H112" stroke="#b9c2e6" stroke-width=".4"/>
      <g fill="#5a6488"><rect x="79" y="60.800" width="16" height=".7"/><rect x="79" y="63.500" width="19" height=".7"/></g>
      <circle cx="103.500" cy="68.500" r="4" fill="#1a2140"/><rect x="101.500" y="67.300" width="4" height="2.400" fill="#e6ebff"/>
      <text x="56" y="26.300" text-anchor="middle" font-size="3" font-weight="700" fill="#f2f4ff">Contact</text>
      <g fill="#c9cfe8"><rect x="48.500" y="28.800" width="15" height=".9"/><rect x="46.500" y="31.600" width="19" height=".9"/><rect x="49.500" y="34.400" width="13" height=".9"/><rect x="49" y="47" width="14" height=".9"/></g>
      <g fill="#e6e9f6"><rect x="49" y="42" width="1.300" height="1.600"/><rect x="55.300" y="42" width="1.600" height="1.600"/><rect x="62" y="42.200" width="1.800" height="1.300"/></g>
    </svg>
  </div>
  <div class="t" style="left:22.800px;top:74.400px;width:20px;height:20px;border-radius:3px;background:#3b71e6;font-size:13px;line-height:20px;text-align:center">1</div>
  <!-- page 2 thumb -->
  <div class="abs" id="p2" style="left:146px;top:18px;width:113px;height:80px;border-radius:2px;overflow:hidden;background:#fff">
    <svg style="left:0;top:0" width="113" height="80" viewBox="0 0 113 80">
      <rect x="38" width="37" height="80" fill="#9e8a68"/>
      <rect x="0" y="37" width="38" height="43" fill="#dcdfdc"/>
      <path d="M8 42c6 0 12 4 14 10-6 0-12-4-14-10ZM20 56c4-6 10-8 17-8-2 8-8 12-17 8ZM26 66c4-2 8-1 12 2v8c-6 0-10-4-12-10ZM4 58c4 0 8 2 9 6-4 0-8-2-9-6Z" fill="#27402c"/>
      <path d="M14 48c8 6 16 16 22 30" stroke="#3a2e22" stroke-width=".8" fill="none"/>
      <rect x="75" y="37" width="38" height="43" fill="#1a2326"/>
      <path d="M75 37H86L84 80H75Z" fill="#1f5f70"/>
      <path d="M84 40c4-3 16-3 21 1 3 8 2 20-1 28-3 5-8 7-11 7-4 0-8-4-9-10-2-8-2-18 0-26Z" fill="#cf7664"/>
      <path d="M96 42c5 0 8 4 9 10 1 8-1 16-4 20 1-8 0-22-5-30Z" fill="#e0907c" opacity=".7"/>
      <path d="M104 37h9V80h-6c1-6 2-10 1-14 2-8 2-20-4-29Z" fill="#2a1c1a"/>
      <path d="M82 37h24c-4 2-6 3-8 3-6 0-12 0-16 2Z" fill="#1a1416"/>
      <path d="M78 37h1.500l-1 43h-1.500ZM81 37h1.200L81 72h-1ZM84.500 37h1.500L84 66h-1.300ZM88 38h1.200L88 58h-1Z" fill="#3fa6c4"/>
      <path d="M86 52c2 6 2 14 0 20" stroke="#2a8aa4" stroke-width="1.600" fill="none" opacity=".8"/>
      <path d="M92 56c-1 3-2 5-2 7 1 1 3 1 4 0M89 67c2 1 5 1 7 0" stroke="#8a3a34" stroke-width=".8" fill="none"/>
      <path d="M84 80c1-4 4-6 8-7 3 1 8 0 12-3 4 2 7 5 9 8v2Z" fill="#33241f"/>
      <circle cx="56" cy="15.500" r="7" fill="none" stroke="#d9ccb0" stroke-width=".7"/><rect x="52" y="13" width="8" height="5" fill="#fff"/>
      <text x="56" y="16.900" text-anchor="middle" font-family="'DejaVu Serif',serif" font-weight="700" font-size="3.600" fill="#9e8a68">HI</text>
      <text x="56.500" y="31" text-anchor="middle" font-size="3.200" font-weight="700" fill="#fff">Services</text>
      <g fill="#f3eee2" opacity=".9"><rect x="51" y="34.500" width="10" height="1"/><rect x="49.500" y="38.300" width="14" height="1"/><rect x="51" y="42" width="11" height="1"/><rect x="52" y="45.800" width="9" height="1"/><rect x="50" y="60.500" width="13" height="1.100"/><rect x="49" y="64" width="15" height="1.100"/></g>
      <rect x="6" y="6.500" width="11" height="1.300" fill="#222"/><rect x="81" y="6.500" width="9" height="1.300" fill="#222"/>
      <g fill="#cfcfcf" opacity=".8"><rect x="6" y="12" width="25" height=".8"/><rect x="6" y="14.500" width="25" height=".8"/><rect x="6" y="17" width="22" height=".8"/><rect x="6" y="19.500" width="25" height=".8"/><rect x="6" y="22" width="24" height=".8"/><rect x="6" y="24.500" width="25" height=".8"/><rect x="6" y="27" width="20" height=".8"/><rect x="6" y="29.500" width="23" height=".8"/>
      <rect x="81" y="12" width="26" height=".8"/><rect x="81" y="14.500" width="26" height=".8"/><rect x="81" y="17" width="24" height=".8"/><rect x="81" y="19.500" width="26" height=".8"/><rect x="81" y="22" width="25" height=".8"/><rect x="81" y="24.500" width="26" height=".8"/><rect x="81" y="27" width="20" height=".8"/></g>
    </svg>
  </div>
  <div class="t" style="left:150px;top:75px;width:20px;height:20px;border-radius:3px;background:#333;font-size:13px;line-height:20px;text-align:center">2</div>
  <!-- add page -->
  <div class="abs" style="left:272.500px;top:18px;width:112px;height:80px;border-radius:3px;background:#494949"></div>
  <div class="abs" style="left:321.500px;top:57px;width:14px;height:2px;background:#fff"></div><div class="abs" style="left:327.500px;top:51px;width:2px;height:14px;background:#fff"></div>
  <!-- footer -->
  <svg style="left:20.500px;top:124px" width="13" height="12" viewBox="0 0 13 12" fill="none" stroke="#d4d4d4" stroke-width="1.300" stroke-linejoin="round"><rect x=".8" y="2.800" width="8.400" height="8.400" rx="1.800"/><path d="M3.600 2.600V2.200A1.400 1.400 0 0 1 5 .8h5.400a1.800 1.800 0 0 1 1.800 1.800V8a1.400 1.400 0 0 1-1.400 1.400H9.400"/></svg>
  <div class="t" id="pages" style="left:40px;top:124.500px;font-size:12.200px;color:#dcdcdc;letter-spacing:-.4px">Pages: <b style="color:#fff">2</b></div>
  <div class="t" id="zoom" style="left:321.500px;top:124.500px;font-size:11.500px;letter-spacing:-.2px;font-weight:700;color:#f0f0f0">53%</div>
  <div class="abs" style="left:363px;top:128.500px;width:107px;height:3px;border-radius:1.500px;background:#333"></div>
  <div class="abs" style="left:363px;top:128.500px;width:33px;height:3px;border-radius:1.500px;background:#3b71e6"></div>
  <div class="abs" style="left:391px;top:125px;width:10px;height:10px;border-radius:50%;background:#3b71e6"></div>
  <svg style="left:499px;top:123px" width="15" height="15" viewBox="0 0 15 15" fill="none" stroke="#f0f0f0" stroke-width="1.300" stroke-linecap="round"><circle cx="7.500" cy="7.500" r="6.300"/><path d="M7.500 4v4.200"/><circle cx="7.500" cy="10.600" r=".5" fill="#f0f0f0"/></svg>
  <div class="t" id="report" style="left:520px;top:124.500px;font-size:11.800px;letter-spacing:-.5px;font-weight:700;color:#f4f4f4">Report an issue</div>
</div>

<!-- collapse chevron -->
<svg style="left:335px;top:341px;z-index:6" width="7" height="9" viewBox="0 0 7 9" fill="none" stroke="#cfcfcf" stroke-width="1.500" stroke-linecap="round" stroke-linejoin="round"><path d="M5.500 1 1.500 4.500l4 3.500"/></svg>
<!-- window edge --><!-- right edge -->
<div class="abs" style="left:958.800px;top:0;width:1.200px;height:640px;background:rgba(255,255,255,.06);z-index:7"></div>
<div class="abs" style="left:0;top:0;width:2px;height:640px;background:#3c3c3c;z-index:7"></div>
<div class="abs" style="left:0;top:0;width:960px;height:1px;background:#333;z-index:7"></div>
<div class="abs" style="left:0;top:638px;width:960px;height:2px;background:#383838;z-index:7"></div>
</body>
</html>
